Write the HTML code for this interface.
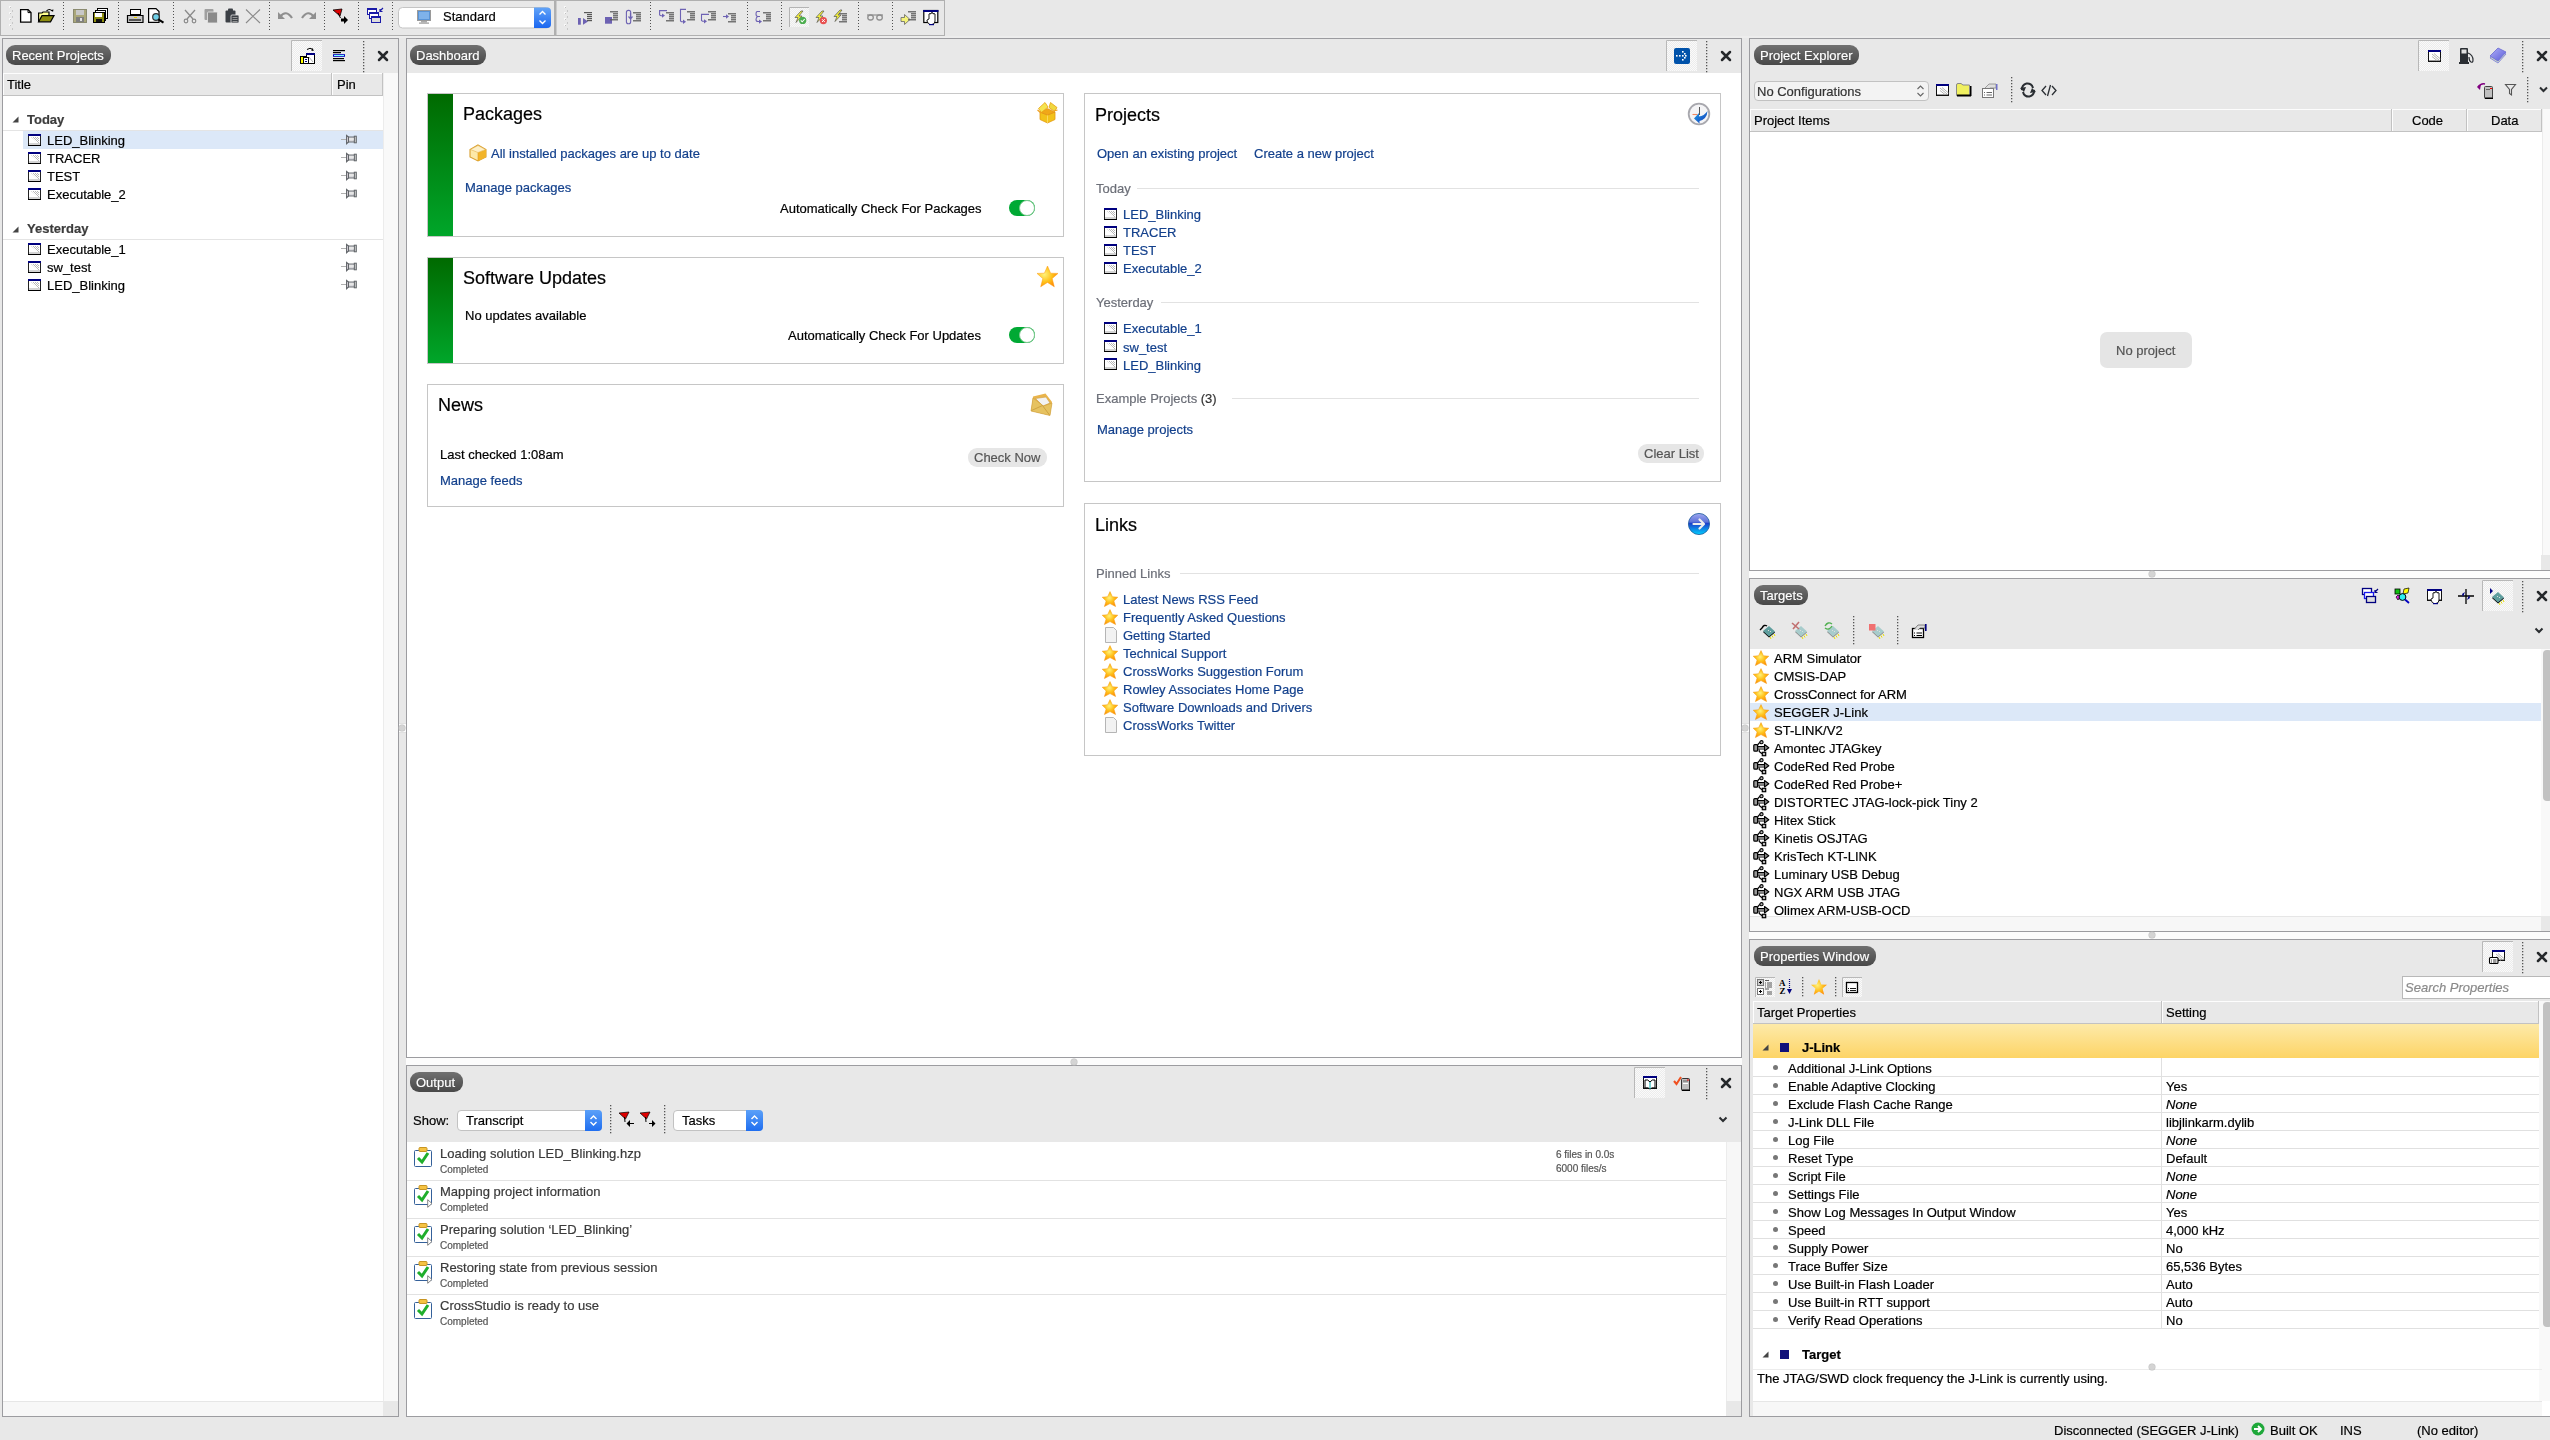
<!DOCTYPE html>
<html><head><meta charset="utf-8"><title>CrossStudio</title>
<style>
html,body{margin:0;padding:0}
body{width:2550px;height:1440px;position:relative;overflow:hidden;background:#e8e8e8;font-family:'Liberation Sans', sans-serif;font-size:13px}
.t{position:absolute;white-space:nowrap;-webkit-text-stroke:0.2px;will-change:transform}
.pill{position:absolute;height:20px;box-sizing:border-box;border-radius:9px;background:linear-gradient(#707070,#484848);color:#fff;font-size:13px;line-height:20px;padding-left:6px;padding-top:1px;-webkit-text-stroke:0.15px #fff;will-change:transform}
svg{overflow:visible}
</style></head><body>
<svg style="position:absolute;left:0;top:0" width="2550" height="38" viewBox="0 0 2550 38"><defs><linearGradient id="cbg" x1="0" y1="0" x2="0" y2="1"><stop offset="0" stop-color="#62a4f8"/><stop offset="1" stop-color="#1a66f0"/></linearGradient><pattern id="chk" width="2" height="2" patternUnits="userSpaceOnUse"><rect width="2" height="2" fill="#ececec"/><rect width="1" height="1" fill="#f8f8f8"/><rect x="1" y="1" width="1" height="1" fill="#f8f8f8"/></pattern></defs><rect x="0.5" y="0.5" width="554" height="35" fill="#e8e8e8" stroke="#b0b0b0"/><rect x="554" y="0" width="2" height="36" fill="#b0b0b0"/><rect x="556" y="0.5" width="388.5" height="35" fill="#e8e8e8" stroke="#b0b0b0"/><rect x="0" y="36" width="2550" height="2" fill="#ededed"/><rect x="9" y="6" width="2" height="2" fill="#f8f8f8"/><rect x="10" y="7" width="1" height="1" fill="#c0c0c0"/><rect x="12" y="10" width="1" height="2" fill="#c8c8c8"/><rect x="9" y="12" width="2" height="2" fill="#f8f8f8"/><rect x="10" y="13" width="1" height="1" fill="#c0c0c0"/><rect x="12" y="16" width="1" height="2" fill="#c8c8c8"/><rect x="9" y="18" width="2" height="2" fill="#f8f8f8"/><rect x="10" y="19" width="1" height="1" fill="#c0c0c0"/><rect x="12" y="22" width="1" height="2" fill="#c8c8c8"/><rect x="9" y="24" width="2" height="2" fill="#f8f8f8"/><rect x="10" y="25" width="1" height="1" fill="#c0c0c0"/><rect x="12" y="28" width="1" height="2" fill="#c8c8c8"/><path d="M20.6 9.6 H28 L31 12.6 V22.2 H20.6 Z" fill="#fff" stroke="#000" stroke-width="1.3"/><path d="M28 9.6 V12.6 H31" fill="none" stroke="#000" stroke-width="1"/><path d="M38.6 21.8 V13 H42 L43 12 H49 V15" fill="#ffff90" stroke="#000" stroke-width="1.2"/><path d="M38.6 21.8 L42 15.6 H54 L50.5 21.8 Z" fill="#8e8e10" stroke="#000" stroke-width="1.2"/><path d="M46.5 11 Q49.5 8 52 11" fill="none" stroke="#000" stroke-width="1.1"/><path d="M51 10 L53 12 L53.5 9.5 Z" fill="#000"/><rect x="63" y="2" width="1" height="1" fill="#505050"/><rect x="63" y="5" width="1" height="1" fill="#505050"/><rect x="63" y="8" width="1" height="1" fill="#505050"/><rect x="63" y="11" width="1" height="1" fill="#505050"/><rect x="63" y="14" width="1" height="1" fill="#505050"/><rect x="63" y="17" width="1" height="1" fill="#505050"/><rect x="63" y="20" width="1" height="1" fill="#505050"/><rect x="63" y="23" width="1" height="1" fill="#505050"/><rect x="63" y="26" width="1" height="1" fill="#505050"/><rect x="63" y="29" width="1" height="1" fill="#505050"/><rect x="73.5" y="9.5" width="13" height="13" fill="#aaa77a" stroke="#8a8a70"/><rect x="76" y="10" width="8" height="5" fill="#c8c8c8"/><rect x="76" y="17" width="8" height="5" fill="#808080"/><rect x="80" y="18" width="2" height="3" fill="#e0e0e0"/><rect x="97.5" y="8.5" width="10" height="10" fill="#fff" stroke="#000"/><rect x="95.5" y="10.5" width="10" height="10" fill="#fff" stroke="#000"/><rect x="93.5" y="12.5" width="11" height="10" fill="#8e8e10" stroke="#000"/><rect x="95" y="13" width="7" height="4" fill="#fff"/><rect x="96" y="19" width="6" height="3" fill="#111"/><rect x="118" y="2" width="1" height="1" fill="#505050"/><rect x="118" y="5" width="1" height="1" fill="#505050"/><rect x="118" y="8" width="1" height="1" fill="#505050"/><rect x="118" y="11" width="1" height="1" fill="#505050"/><rect x="118" y="14" width="1" height="1" fill="#505050"/><rect x="118" y="17" width="1" height="1" fill="#505050"/><rect x="118" y="20" width="1" height="1" fill="#505050"/><rect x="118" y="23" width="1" height="1" fill="#505050"/><rect x="118" y="26" width="1" height="1" fill="#505050"/><rect x="118" y="29" width="1" height="1" fill="#505050"/><rect x="130.5" y="9.5" width="10" height="5" fill="#fff" stroke="#000"/><path d="M127.5 15.5 H143 V22.5 H127.5 Z" fill="#c8c8c8" stroke="#000" stroke-width="1.2"/><rect x="129" y="19" width="12" height="2" fill="#555"/><rect x="134" y="17" width="3" height="1" fill="#e8d000"/><path d="M148.6 8.6 H156 L159 11.6 V22.4 H148.6 Z" fill="#fff" stroke="#000" stroke-width="1.2"/><circle cx="156" cy="17" r="3.3" fill="#6fd0e8" stroke="#333" stroke-width="1.2"/><path d="M158.3 19.3 L163.5 22.6" stroke="#000" stroke-width="2"/><rect x="173" y="2" width="1" height="1" fill="#505050"/><rect x="173" y="5" width="1" height="1" fill="#505050"/><rect x="173" y="8" width="1" height="1" fill="#505050"/><rect x="173" y="11" width="1" height="1" fill="#505050"/><rect x="173" y="14" width="1" height="1" fill="#505050"/><rect x="173" y="17" width="1" height="1" fill="#505050"/><rect x="173" y="20" width="1" height="1" fill="#505050"/><rect x="173" y="23" width="1" height="1" fill="#505050"/><rect x="173" y="26" width="1" height="1" fill="#505050"/><rect x="173" y="29" width="1" height="1" fill="#505050"/><path d="M185 10 L193 19 M195 10 L187 19" stroke="#8a8a8a" stroke-width="1.3"/><circle cx="186" cy="21" r="1.8" fill="none" stroke="#8a8a8a" stroke-width="1.2"/><circle cx="194" cy="21" r="1.8" fill="none" stroke="#8a8a8a" stroke-width="1.2"/><rect x="204.5" y="9" width="9" height="11" rx="1" fill="#a0a0a0"/><rect x="207.5" y="12" width="10" height="11" rx="1" fill="#8a8a8a" stroke="#e8e8e8" stroke-width="0.8"/><rect x="225.5" y="10.5" width="10" height="12" rx="1" fill="#3c4046"/><rect x="228" y="8.5" width="5" height="3" rx="1" fill="#3c4046"/><rect x="231" y="15" width="8" height="8" rx="1" fill="#3c4046" stroke="#e8e8e8" stroke-width="0.8"/><path d="M232.5 17.5 H237.5 M232.5 19.5 H237.5 M232.5 21.5 H237.5" stroke="#aaa" stroke-width="0.8"/><path d="M246 9.5 L260 23 M260 9.5 L246 23" stroke="#8a8a8a" stroke-width="1.1"/><rect x="269" y="2" width="1" height="1" fill="#505050"/><rect x="269" y="5" width="1" height="1" fill="#505050"/><rect x="269" y="8" width="1" height="1" fill="#505050"/><rect x="269" y="11" width="1" height="1" fill="#505050"/><rect x="269" y="14" width="1" height="1" fill="#505050"/><rect x="269" y="17" width="1" height="1" fill="#505050"/><rect x="269" y="20" width="1" height="1" fill="#505050"/><rect x="269" y="23" width="1" height="1" fill="#505050"/><rect x="269" y="26" width="1" height="1" fill="#505050"/><rect x="269" y="29" width="1" height="1" fill="#505050"/><path d="M280 17 Q286 9 292 18" fill="none" stroke="#8f8f8f" stroke-width="2.2"/><path d="M278 12 L278 19 L285 19 Z" fill="#8f8f8f"/><path d="M314 17 Q308 9 302 18" fill="none" stroke="#8f8f8f" stroke-width="2.2"/><path d="M316 12 L316 19 L309 19 Z" fill="#8f8f8f"/><rect x="324" y="2" width="1" height="1" fill="#505050"/><rect x="324" y="5" width="1" height="1" fill="#505050"/><rect x="324" y="8" width="1" height="1" fill="#505050"/><rect x="324" y="11" width="1" height="1" fill="#505050"/><rect x="324" y="14" width="1" height="1" fill="#505050"/><rect x="324" y="17" width="1" height="1" fill="#505050"/><rect x="324" y="20" width="1" height="1" fill="#505050"/><rect x="324" y="23" width="1" height="1" fill="#505050"/><rect x="324" y="26" width="1" height="1" fill="#505050"/><rect x="324" y="29" width="1" height="1" fill="#505050"/><path d="M333 10 L342 9 L340 16 Z" fill="#e00000" stroke="#000" stroke-width="0.8"/><path d="M338 13 L340.5 18" stroke="#000" stroke-width="1"/><path d="M341 18.5 H344 V16 L348 20 L344 24 V21.5 H341 Z" fill="#000"/><rect x="358" y="2" width="1" height="1" fill="#505050"/><rect x="358" y="5" width="1" height="1" fill="#505050"/><rect x="358" y="8" width="1" height="1" fill="#505050"/><rect x="358" y="11" width="1" height="1" fill="#505050"/><rect x="358" y="14" width="1" height="1" fill="#505050"/><rect x="358" y="17" width="1" height="1" fill="#505050"/><rect x="358" y="20" width="1" height="1" fill="#505050"/><rect x="358" y="23" width="1" height="1" fill="#505050"/><rect x="358" y="26" width="1" height="1" fill="#505050"/><rect x="358" y="29" width="1" height="1" fill="#505050"/><rect x="367.5" y="8.5" width="9" height="6" fill="#fff" stroke="#1a1aa8"/><rect x="369.5" y="12.5" width="9" height="6" fill="#fff" stroke="#1a1aa8"/><rect x="371.5" y="16.5" width="9" height="6" fill="#dcdcdc" stroke="#1a1aa8"/><rect x="367" y="8" width="10" height="2" fill="#1a1aa8"/><rect x="369" y="12" width="10" height="2" fill="#1a1aa8"/><rect x="371" y="16" width="10" height="2" fill="#1a1aa8"/><path d="M383 8 L380 11 M380 9 V11.5 H382.5" stroke="#1a1aa8" stroke-width="1.2" fill="none"/><rect x="392" y="2" width="1" height="1" fill="#505050"/><rect x="392" y="5" width="1" height="1" fill="#505050"/><rect x="392" y="8" width="1" height="1" fill="#505050"/><rect x="392" y="11" width="1" height="1" fill="#505050"/><rect x="392" y="14" width="1" height="1" fill="#505050"/><rect x="392" y="17" width="1" height="1" fill="#505050"/><rect x="392" y="20" width="1" height="1" fill="#505050"/><rect x="392" y="23" width="1" height="1" fill="#505050"/><rect x="392" y="26" width="1" height="1" fill="#505050"/><rect x="392" y="29" width="1" height="1" fill="#505050"/><rect x="398.5" y="7.5" width="152" height="20.5" rx="4" fill="#fff" stroke="#c4c4c4"/><path d="M534 7.5 H547 A4 4 0 0 1 551 11.5 V24 A4 4 0 0 1 547 28 H534 Z" fill="url(#cbg)"/><path d="M539.5 14.5 L542.5 11.5 L545.5 14.5 M539.5 20.5 L542.5 23.5 L545.5 20.5" stroke="#fff" stroke-width="1.4" fill="none"/><rect x="417.5" y="10.5" width="13" height="10" fill="#5a94d6" stroke="#9a9a9a"/><rect x="419" y="12" width="10" height="7" fill="#7fb2ea"/><rect x="421" y="21" width="6" height="1.5" fill="#aaa"/><rect x="419" y="22.5" width="10" height="1.2" fill="#999"/><rect x="564" y="6" width="2" height="2" fill="#f8f8f8"/><rect x="565" y="7" width="1" height="1" fill="#c0c0c0"/><rect x="567" y="10" width="1" height="2" fill="#c8c8c8"/><rect x="564" y="12" width="2" height="2" fill="#f8f8f8"/><rect x="565" y="13" width="1" height="1" fill="#c0c0c0"/><rect x="567" y="16" width="1" height="2" fill="#c8c8c8"/><rect x="564" y="18" width="2" height="2" fill="#f8f8f8"/><rect x="565" y="19" width="1" height="1" fill="#c0c0c0"/><rect x="567" y="22" width="1" height="2" fill="#c8c8c8"/><rect x="564" y="24" width="2" height="2" fill="#f8f8f8"/><rect x="565" y="25" width="1" height="1" fill="#c0c0c0"/><rect x="567" y="28" width="1" height="2" fill="#c8c8c8"/><rect x="578" y="18" width="2.8" height="6.7" fill="#6d62b3"/><path d="M583 18 L588 21.4 L583 24.7 Z" fill="#6d62b3"/><rect x="584" y="12" width="8" height="1.2" fill="#585858"/><rect x="587" y="14" width="5" height="1.2" fill="#585858"/><rect x="587" y="16" width="5" height="1.2" fill="#585858"/><rect x="587" y="18" width="5" height="1.2" fill="#585858"/><rect x="587" y="20" width="5" height="1.2" fill="#585858"/><rect x="605" y="17" width="7" height="6.7" fill="#6d62b3"/><rect x="610" y="11.2" width="8" height="1.2" fill="#585858"/><rect x="613" y="13.2" width="5" height="1.2" fill="#585858"/><rect x="613" y="15.2" width="5" height="1.2" fill="#585858"/><rect x="613" y="17.2" width="5" height="1.2" fill="#585858"/><rect x="610" y="19.2" width="8" height="1.2" fill="#585858"/><rect x="626.4" y="10.4" width="4.3" height="13.4" rx="2" fill="none" stroke="#6d62b3" stroke-width="1.1"/><path d="M630.5 13 V18 M628.5 16.5 L630.5 18.8 L632.5 16.5" stroke="#6d62b3" stroke-width="1.2" fill="none"/><rect x="633" y="12.2" width="8" height="1.2" fill="#585858"/><rect x="636" y="14.2" width="5" height="1.2" fill="#585858"/><rect x="636" y="16.2" width="5" height="1.2" fill="#585858"/><rect x="636" y="18.2" width="5" height="1.2" fill="#585858"/><rect x="633" y="20.2" width="8" height="1.2" fill="#585858"/><rect x="650" y="2" width="1" height="1" fill="#505050"/><rect x="650" y="5" width="1" height="1" fill="#505050"/><rect x="650" y="8" width="1" height="1" fill="#505050"/><rect x="650" y="11" width="1" height="1" fill="#505050"/><rect x="650" y="14" width="1" height="1" fill="#505050"/><rect x="650" y="17" width="1" height="1" fill="#505050"/><rect x="650" y="20" width="1" height="1" fill="#505050"/><rect x="650" y="23" width="1" height="1" fill="#505050"/><rect x="650" y="26" width="1" height="1" fill="#505050"/><rect x="650" y="29" width="1" height="1" fill="#505050"/><path d="M667 10.6 H659.6 V15 L661 15.8 H663" stroke="#6d62b3" stroke-width="1.1" fill="none"/><path d="M662 13.5 L665 15.6 L662 17.8 Z" fill="#6d62b3"/><rect x="666" y="12.2" width="8" height="1.2" fill="#585858"/><rect x="669" y="14.2" width="5" height="1.2" fill="#585858"/><rect x="669" y="16.2" width="5" height="1.2" fill="#585858"/><rect x="669" y="18.2" width="5" height="1.2" fill="#585858"/><rect x="666" y="20.2" width="8" height="1.2" fill="#585858"/><path d="M686 9.4 H680.5 V21 L681.5 21.7 H684" stroke="#6d62b3" stroke-width="1.1" fill="none"/><path d="M683 19.6 L686 21.7 L683 23.9 Z" fill="#6d62b3"/><rect x="687" y="11.2" width="8" height="1.2" fill="#585858"/><rect x="690" y="13.2" width="5" height="1.2" fill="#585858"/><rect x="690" y="15.2" width="5" height="1.2" fill="#585858"/><rect x="690" y="17.2" width="5" height="1.2" fill="#585858"/><rect x="687" y="19.2" width="8" height="1.2" fill="#585858"/><path d="M709 14.4 H701.5 V20.5 L702.5 21.2 H705" stroke="#6d62b3" stroke-width="1.1" fill="none"/><path d="M704 19.2 L707 21.3 L704 23.5 Z" fill="#6d62b3"/><rect x="708" y="11.2" width="8" height="1.2" fill="#585858"/><rect x="711" y="13.2" width="5" height="1.2" fill="#585858"/><rect x="711" y="15.2" width="5" height="1.2" fill="#585858"/><rect x="711" y="17.2" width="5" height="1.2" fill="#585858"/><rect x="708" y="19.2" width="8" height="1.2" fill="#585858"/><path d="M723 16.5 H727" stroke="#6d62b3" stroke-width="1.1"/><path d="M726 14.3 L729 16.5 L726 18.7 Z" fill="#6d62b3"/><rect x="728" y="13.2" width="8" height="1.2" fill="#585858"/><rect x="731" y="15.2" width="5" height="1.2" fill="#585858"/><rect x="731" y="17.2" width="5" height="1.2" fill="#585858"/><rect x="731" y="19.2" width="5" height="1.2" fill="#585858"/><rect x="728" y="21.2" width="8" height="1.2" fill="#585858"/><rect x="747" y="2" width="1" height="1" fill="#505050"/><rect x="747" y="5" width="1" height="1" fill="#505050"/><rect x="747" y="8" width="1" height="1" fill="#505050"/><rect x="747" y="11" width="1" height="1" fill="#505050"/><rect x="747" y="14" width="1" height="1" fill="#505050"/><rect x="747" y="17" width="1" height="1" fill="#505050"/><rect x="747" y="20" width="1" height="1" fill="#505050"/><rect x="747" y="23" width="1" height="1" fill="#505050"/><rect x="747" y="26" width="1" height="1" fill="#505050"/><rect x="747" y="29" width="1" height="1" fill="#505050"/><path d="M760 11.5 H757 Q756 12 756 14 Q756 16.5 758 16.5 H760 M758 16.5 Q756 17 756 19.5 Q756 21.5 758 21.5 H760" stroke="#6d62b3" stroke-width="1.1" fill="none"/><path d="M759 19.4 L762 21.5 L759 23.7 Z" fill="#6d62b3"/><rect x="763" y="12.2" width="8" height="1.2" fill="#585858"/><rect x="766" y="14.2" width="5" height="1.2" fill="#585858"/><rect x="766" y="16.2" width="5" height="1.2" fill="#585858"/><rect x="766" y="18.2" width="5" height="1.2" fill="#585858"/><rect x="763" y="20.2" width="8" height="1.2" fill="#585858"/><rect x="781" y="2" width="1" height="1" fill="#505050"/><rect x="781" y="5" width="1" height="1" fill="#505050"/><rect x="781" y="8" width="1" height="1" fill="#505050"/><rect x="781" y="11" width="1" height="1" fill="#505050"/><rect x="781" y="14" width="1" height="1" fill="#505050"/><rect x="781" y="17" width="1" height="1" fill="#505050"/><rect x="781" y="20" width="1" height="1" fill="#505050"/><rect x="781" y="23" width="1" height="1" fill="#505050"/><rect x="781" y="26" width="1" height="1" fill="#505050"/><rect x="781" y="29" width="1" height="1" fill="#505050"/><rect x="789" y="7" width="20" height="20" fill="url(#chk)"/><path d="M789.5 27 V7.5 H809" stroke="#b4b4b4" fill="none"/><path d="M801 11 L803 11 L799 16 L802 16 L796 22.5 L798 17.5 L795 17.5 Z" fill="#f3f03a" stroke="#555" stroke-width="0.7"/><circle cx="802.7" cy="20.4" r="3.6" fill="#4cae4f"/><path d="M800.8 20.4 L802.2 21.8 L804.7 19" stroke="#fff" stroke-width="1.1" fill="none"/><path d="M822 11 L824 11 L820 16 L823 16 L817 22.5 L819 17.5 L816 17.5 Z" fill="#f3f03a" stroke="#555" stroke-width="0.7"/><circle cx="823.4" cy="20.6" r="3.6" fill="#e85050"/><path d="M822 19.2 L824.8 22 M824.8 19.2 L822 22" stroke="#fff" stroke-width="1"/><path d="M840 10 L842 10 L838 15 L841 15 L835 21.5 L837 16.5 L834 16.5 Z" fill="#f3f03a" stroke="#555" stroke-width="0.7"/><rect x="839" y="13.2" width="8" height="1.2" fill="#585858"/><rect x="842" y="15.2" width="5" height="1.2" fill="#585858"/><rect x="842" y="17.2" width="5" height="1.2" fill="#585858"/><rect x="842" y="19.2" width="5" height="1.2" fill="#585858"/><rect x="839" y="21.2" width="8" height="1.2" fill="#585858"/><rect x="858" y="2" width="1" height="1" fill="#505050"/><rect x="858" y="5" width="1" height="1" fill="#505050"/><rect x="858" y="8" width="1" height="1" fill="#505050"/><rect x="858" y="11" width="1" height="1" fill="#505050"/><rect x="858" y="14" width="1" height="1" fill="#505050"/><rect x="858" y="17" width="1" height="1" fill="#505050"/><rect x="858" y="20" width="1" height="1" fill="#505050"/><rect x="858" y="23" width="1" height="1" fill="#505050"/><rect x="858" y="26" width="1" height="1" fill="#505050"/><rect x="858" y="29" width="1" height="1" fill="#505050"/><path d="M867 15 H883" stroke="#8f8f8f" stroke-width="1.2"/><rect x="867.8" y="15" width="5.5" height="5" rx="2.5" fill="none" stroke="#8f8f8f" stroke-width="1.3"/><rect x="876.8" y="15" width="5.5" height="5" rx="2.5" fill="none" stroke="#8f8f8f" stroke-width="1.3"/><rect x="892" y="2" width="1" height="1" fill="#505050"/><rect x="892" y="5" width="1" height="1" fill="#505050"/><rect x="892" y="8" width="1" height="1" fill="#505050"/><rect x="892" y="11" width="1" height="1" fill="#505050"/><rect x="892" y="14" width="1" height="1" fill="#505050"/><rect x="892" y="17" width="1" height="1" fill="#505050"/><rect x="892" y="20" width="1" height="1" fill="#505050"/><rect x="892" y="23" width="1" height="1" fill="#505050"/><rect x="892" y="26" width="1" height="1" fill="#505050"/><rect x="892" y="29" width="1" height="1" fill="#505050"/><path d="M901 17.5 H904.5 V14.5 L910 19.5 L904.5 24.5 V21.5 H901 Z" fill="#f4f37a" stroke="#666" stroke-width="0.8"/><rect x="908" y="11.2" width="8" height="1.2" fill="#585858"/><rect x="911" y="13.2" width="5" height="1.2" fill="#585858"/><rect x="911" y="15.2" width="5" height="1.2" fill="#585858"/><rect x="911" y="17.2" width="5" height="1.2" fill="#585858"/><rect x="908" y="19.2" width="8" height="1.2" fill="#585858"/><rect x="923.8" y="10.5" width="14" height="12" fill="#fff" stroke="#000" stroke-width="1.2"/><rect x="923.2" y="10" width="15.2" height="2" fill="#000080"/><path d="M927 20 L929 19 V14 Q930 13 931 14 V13 Q932 12 933 13 V14 Q934 13 935 14 V21 Q935 24 932 24.5 H930 Q928 24 927 21 Z" fill="#fff" stroke="#000" stroke-width="0.9"/><rect x="929" y="24" width="5" height="1.2" fill="#000080"/></svg><div class="t" style="left:443px;top:9px;font-size:13px;line-height:16px;color:#000;font-weight:normal;font-style:normal;">Standard</div><div style="position:absolute;left:2px;top:38px;width:397px;height:1379px;box-sizing:border-box;border:1px solid #9c9ca0;background:#fff"></div><div style="position:absolute;left:3px;top:39px;width:395px;height:34px;background:#e8e8e8"></div><div class="pill" style="left:6px;top:45px;width:105px;">Recent Projects</div><div style="position:absolute;left:383px;top:73px;width:15px;height:1343px;background:#f9f9f9;border-left:1px solid #ececec;box-sizing:border-box"></div><div style="position:absolute;left:3px;top:73px;width:380px;height:23px;background:#e8e8e8"></div><div style="position:absolute;left:3px;top:73px;width:380px;height:1px;background:#fdfdfd"></div><div style="position:absolute;left:3px;top:95px;width:380px;height:1px;background:#c2c2c2"></div><div style="position:absolute;left:382px;top:73px;width:1px;height:23px;background:#c2c2c2"></div><div style="position:absolute;left:331px;top:73px;width:1px;height:22px;background:#c2c2c2"></div><div style="position:absolute;left:332px;top:74px;width:1px;height:21px;background:#fdfdfd"></div><div style="position:absolute;left:3px;top:74px;width:1px;height:21px;background:#fdfdfd"></div><div style="position:absolute;left:3px;top:1401px;width:380px;height:15px;background:#f7f7f7;border-top:1px solid #e6e6e6;box-sizing:border-box"></div><div style="position:absolute;left:383px;top:1401px;width:15px;height:15px;background:#e8e8e8"></div><div class="t" style="left:7px;top:77px;font-size:13px;line-height:16px;color:#000;font-weight:normal;font-style:normal;">Title</div><div class="t" style="left:337px;top:77px;font-size:13px;line-height:16px;color:#000;font-weight:normal;font-style:normal;">Pin</div><svg style="position:absolute;left:377px;top:50px" width="12" height="12" viewBox="0 0 12 12"><path d="M2 2 L10 10 M10 2 L2 10" stroke="#25282b" stroke-width="2.5" stroke-linecap="round"/></svg><svg style="position:absolute;left:12px;top:116px" width="7" height="7" viewBox="0 0 7 7"><path d="M6.5 0.5 L6.5 6.5 L0.5 6.5 Z" fill="#444"/></svg><div class="t" style="left:27px;top:112px;font-size:13px;line-height:16px;color:#3c3c3c;font-weight:bold;font-style:normal;">Today</div><div style="position:absolute;left:3px;top:130px;width:380px;height:1px;background:#e4e4e4"></div><div style="position:absolute;left:23px;top:131px;width:360px;height:18px;background:#dce8f8"></div><svg style="position:absolute;left:12px;top:226px" width="7" height="7" viewBox="0 0 7 7"><path d="M6.5 0.5 L6.5 6.5 L0.5 6.5 Z" fill="#444"/></svg><div class="t" style="left:27px;top:221px;font-size:13px;line-height:16px;color:#3c3c3c;font-weight:bold;font-style:normal;">Yesterday</div><div style="position:absolute;left:3px;top:239px;width:380px;height:1px;background:#e4e4e4"></div><svg style="position:absolute;left:28px;top:134px" width="13" height="12" viewBox="0 0 13 12"><defs><pattern id="pdith" width="2" height="2" patternUnits="userSpaceOnUse"><rect width="2" height="2" fill="#fff"/><rect width="1" height="1" fill="#999"/><rect x="1" y="1" width="1" height="1" fill="#999"/></pattern></defs><rect x="0.5" y="0.5" width="12" height="11" fill="#fff" stroke="#222"/><path d="M3 3 L11 10 H11 V3 Z" fill="url(#pdith)" opacity="0.7"/><rect x="0" y="0" width="13" height="2" fill="#000080"/><rect x="1" y="9.5" width="11" height="1" fill="#aaa"/><rect x="0" y="11" width="13" height="1" fill="#000"/></svg><div class="t" style="left:47px;top:133px;font-size:13px;line-height:16px;color:#000;font-weight:normal;font-style:normal;">LED_Blinking</div><svg style="position:absolute;left:341px;top:135px" width="16" height="10" viewBox="0 0 16 10"><path d="M0 4.5 H5.5" stroke="#b0b0b0" stroke-width="1"/><rect x="7.5" y="2" width="6" height="5" fill="#d8d8dc" stroke="#606468" stroke-width="0.9"/><path d="M5.6 0.5 L7.5 2 V7 L5.6 8.7 Z" fill="#e8e0e8" stroke="#606468" stroke-width="1.1"/><rect x="13.3" y="1.2" width="2" height="6.6" fill="#d0d0d0" stroke="#606468" stroke-width="1"/><path d="M8 4 H13" stroke="#f4f4f0" stroke-width="1"/></svg><svg style="position:absolute;left:28px;top:152px" width="13" height="12" viewBox="0 0 13 12"><defs><pattern id="pdith" width="2" height="2" patternUnits="userSpaceOnUse"><rect width="2" height="2" fill="#fff"/><rect width="1" height="1" fill="#999"/><rect x="1" y="1" width="1" height="1" fill="#999"/></pattern></defs><rect x="0.5" y="0.5" width="12" height="11" fill="#fff" stroke="#222"/><path d="M3 3 L11 10 H11 V3 Z" fill="url(#pdith)" opacity="0.7"/><rect x="0" y="0" width="13" height="2" fill="#000080"/><rect x="1" y="9.5" width="11" height="1" fill="#aaa"/><rect x="0" y="11" width="13" height="1" fill="#000"/></svg><div class="t" style="left:47px;top:151px;font-size:13px;line-height:16px;color:#000;font-weight:normal;font-style:normal;">TRACER</div><svg style="position:absolute;left:341px;top:153px" width="16" height="10" viewBox="0 0 16 10"><path d="M0 4.5 H5.5" stroke="#b0b0b0" stroke-width="1"/><rect x="7.5" y="2" width="6" height="5" fill="#d8d8dc" stroke="#606468" stroke-width="0.9"/><path d="M5.6 0.5 L7.5 2 V7 L5.6 8.7 Z" fill="#e8e0e8" stroke="#606468" stroke-width="1.1"/><rect x="13.3" y="1.2" width="2" height="6.6" fill="#d0d0d0" stroke="#606468" stroke-width="1"/><path d="M8 4 H13" stroke="#f4f4f0" stroke-width="1"/></svg><svg style="position:absolute;left:28px;top:170px" width="13" height="12" viewBox="0 0 13 12"><defs><pattern id="pdith" width="2" height="2" patternUnits="userSpaceOnUse"><rect width="2" height="2" fill="#fff"/><rect width="1" height="1" fill="#999"/><rect x="1" y="1" width="1" height="1" fill="#999"/></pattern></defs><rect x="0.5" y="0.5" width="12" height="11" fill="#fff" stroke="#222"/><path d="M3 3 L11 10 H11 V3 Z" fill="url(#pdith)" opacity="0.7"/><rect x="0" y="0" width="13" height="2" fill="#000080"/><rect x="1" y="9.5" width="11" height="1" fill="#aaa"/><rect x="0" y="11" width="13" height="1" fill="#000"/></svg><div class="t" style="left:47px;top:169px;font-size:13px;line-height:16px;color:#000;font-weight:normal;font-style:normal;">TEST</div><svg style="position:absolute;left:341px;top:171px" width="16" height="10" viewBox="0 0 16 10"><path d="M0 4.5 H5.5" stroke="#b0b0b0" stroke-width="1"/><rect x="7.5" y="2" width="6" height="5" fill="#d8d8dc" stroke="#606468" stroke-width="0.9"/><path d="M5.6 0.5 L7.5 2 V7 L5.6 8.7 Z" fill="#e8e0e8" stroke="#606468" stroke-width="1.1"/><rect x="13.3" y="1.2" width="2" height="6.6" fill="#d0d0d0" stroke="#606468" stroke-width="1"/><path d="M8 4 H13" stroke="#f4f4f0" stroke-width="1"/></svg><svg style="position:absolute;left:28px;top:188px" width="13" height="12" viewBox="0 0 13 12"><defs><pattern id="pdith" width="2" height="2" patternUnits="userSpaceOnUse"><rect width="2" height="2" fill="#fff"/><rect width="1" height="1" fill="#999"/><rect x="1" y="1" width="1" height="1" fill="#999"/></pattern></defs><rect x="0.5" y="0.5" width="12" height="11" fill="#fff" stroke="#222"/><path d="M3 3 L11 10 H11 V3 Z" fill="url(#pdith)" opacity="0.7"/><rect x="0" y="0" width="13" height="2" fill="#000080"/><rect x="1" y="9.5" width="11" height="1" fill="#aaa"/><rect x="0" y="11" width="13" height="1" fill="#000"/></svg><div class="t" style="left:47px;top:187px;font-size:13px;line-height:16px;color:#000;font-weight:normal;font-style:normal;">Executable_2</div><svg style="position:absolute;left:341px;top:189px" width="16" height="10" viewBox="0 0 16 10"><path d="M0 4.5 H5.5" stroke="#b0b0b0" stroke-width="1"/><rect x="7.5" y="2" width="6" height="5" fill="#d8d8dc" stroke="#606468" stroke-width="0.9"/><path d="M5.6 0.5 L7.5 2 V7 L5.6 8.7 Z" fill="#e8e0e8" stroke="#606468" stroke-width="1.1"/><rect x="13.3" y="1.2" width="2" height="6.6" fill="#d0d0d0" stroke="#606468" stroke-width="1"/><path d="M8 4 H13" stroke="#f4f4f0" stroke-width="1"/></svg><svg style="position:absolute;left:28px;top:243px" width="13" height="12" viewBox="0 0 13 12"><defs><pattern id="pdith" width="2" height="2" patternUnits="userSpaceOnUse"><rect width="2" height="2" fill="#fff"/><rect width="1" height="1" fill="#999"/><rect x="1" y="1" width="1" height="1" fill="#999"/></pattern></defs><rect x="0.5" y="0.5" width="12" height="11" fill="#fff" stroke="#222"/><path d="M3 3 L11 10 H11 V3 Z" fill="url(#pdith)" opacity="0.7"/><rect x="0" y="0" width="13" height="2" fill="#000080"/><rect x="1" y="9.5" width="11" height="1" fill="#aaa"/><rect x="0" y="11" width="13" height="1" fill="#000"/></svg><div class="t" style="left:47px;top:242px;font-size:13px;line-height:16px;color:#000;font-weight:normal;font-style:normal;">Executable_1</div><svg style="position:absolute;left:341px;top:244px" width="16" height="10" viewBox="0 0 16 10"><path d="M0 4.5 H5.5" stroke="#b0b0b0" stroke-width="1"/><rect x="7.5" y="2" width="6" height="5" fill="#d8d8dc" stroke="#606468" stroke-width="0.9"/><path d="M5.6 0.5 L7.5 2 V7 L5.6 8.7 Z" fill="#e8e0e8" stroke="#606468" stroke-width="1.1"/><rect x="13.3" y="1.2" width="2" height="6.6" fill="#d0d0d0" stroke="#606468" stroke-width="1"/><path d="M8 4 H13" stroke="#f4f4f0" stroke-width="1"/></svg><svg style="position:absolute;left:28px;top:261px" width="13" height="12" viewBox="0 0 13 12"><defs><pattern id="pdith" width="2" height="2" patternUnits="userSpaceOnUse"><rect width="2" height="2" fill="#fff"/><rect width="1" height="1" fill="#999"/><rect x="1" y="1" width="1" height="1" fill="#999"/></pattern></defs><rect x="0.5" y="0.5" width="12" height="11" fill="#fff" stroke="#222"/><path d="M3 3 L11 10 H11 V3 Z" fill="url(#pdith)" opacity="0.7"/><rect x="0" y="0" width="13" height="2" fill="#000080"/><rect x="1" y="9.5" width="11" height="1" fill="#aaa"/><rect x="0" y="11" width="13" height="1" fill="#000"/></svg><div class="t" style="left:47px;top:260px;font-size:13px;line-height:16px;color:#000;font-weight:normal;font-style:normal;">sw_test</div><svg style="position:absolute;left:341px;top:262px" width="16" height="10" viewBox="0 0 16 10"><path d="M0 4.5 H5.5" stroke="#b0b0b0" stroke-width="1"/><rect x="7.5" y="2" width="6" height="5" fill="#d8d8dc" stroke="#606468" stroke-width="0.9"/><path d="M5.6 0.5 L7.5 2 V7 L5.6 8.7 Z" fill="#e8e0e8" stroke="#606468" stroke-width="1.1"/><rect x="13.3" y="1.2" width="2" height="6.6" fill="#d0d0d0" stroke="#606468" stroke-width="1"/><path d="M8 4 H13" stroke="#f4f4f0" stroke-width="1"/></svg><svg style="position:absolute;left:28px;top:279px" width="13" height="12" viewBox="0 0 13 12"><defs><pattern id="pdith" width="2" height="2" patternUnits="userSpaceOnUse"><rect width="2" height="2" fill="#fff"/><rect width="1" height="1" fill="#999"/><rect x="1" y="1" width="1" height="1" fill="#999"/></pattern></defs><rect x="0.5" y="0.5" width="12" height="11" fill="#fff" stroke="#222"/><path d="M3 3 L11 10 H11 V3 Z" fill="url(#pdith)" opacity="0.7"/><rect x="0" y="0" width="13" height="2" fill="#000080"/><rect x="1" y="9.5" width="11" height="1" fill="#aaa"/><rect x="0" y="11" width="13" height="1" fill="#000"/></svg><div class="t" style="left:47px;top:278px;font-size:13px;line-height:16px;color:#000;font-weight:normal;font-style:normal;">LED_Blinking</div><svg style="position:absolute;left:341px;top:280px" width="16" height="10" viewBox="0 0 16 10"><path d="M0 4.5 H5.5" stroke="#b0b0b0" stroke-width="1"/><rect x="7.5" y="2" width="6" height="5" fill="#d8d8dc" stroke="#606468" stroke-width="0.9"/><path d="M5.6 0.5 L7.5 2 V7 L5.6 8.7 Z" fill="#e8e0e8" stroke="#606468" stroke-width="1.1"/><rect x="13.3" y="1.2" width="2" height="6.6" fill="#d0d0d0" stroke="#606468" stroke-width="1"/><path d="M8 4 H13" stroke="#f4f4f0" stroke-width="1"/></svg><div style="position:absolute;left:406px;top:38px;width:1336px;height:1020px;box-sizing:border-box;border:1px solid #9c9ca0;background:#fff"></div><div style="position:absolute;left:407px;top:39px;width:1334px;height:34px;background:#e8e8e8"></div><div class="pill" style="left:410px;top:45px;width:76px;">Dashboard</div><svg style="position:absolute;left:1720px;top:50px" width="12" height="12" viewBox="0 0 12 12"><path d="M2 2 L10 10 M10 2 L2 10" stroke="#25282b" stroke-width="2.5" stroke-linecap="round"/></svg><div style="position:absolute;left:427px;top:93px;width:637px;height:144px;box-sizing:border-box;border:1px solid #c6c6c6;background:#fff"></div><div style="position:absolute;left:428px;top:94px;width:25px;height:142px;background:linear-gradient(#006a00,#00a62a)"></div><div class="t" style="left:463px;top:104px;font-size:18px;line-height:20px;color:#000;font-weight:normal;font-style:normal;">Packages</div><div class="t" style="left:491px;top:146px;font-size:13px;line-height:16px;color:#13408c;font-weight:normal;font-style:normal;">All installed packages are up to date</div><div class="t" style="left:465px;top:180px;font-size:13px;line-height:16px;color:#13408c;font-weight:normal;font-style:normal;">Manage packages</div><div class="t" style="left:780px;top:201px;font-size:13px;line-height:16px;color:#000;font-weight:normal;font-style:normal;">Automatically Check For Packages</div><div style="position:absolute;left:1009px;top:200px;width:26px;height:16px;box-sizing:border-box;border-radius:8px;background:#00a934"></div><div style="position:absolute;left:1019px;top:200px;width:16px;height:16px;box-sizing:border-box;border-radius:8px;background:#fff;border:1px solid #7cc98f"></div><div style="position:absolute;left:427px;top:257px;width:637px;height:107px;box-sizing:border-box;border:1px solid #c6c6c6;background:#fff"></div><div style="position:absolute;left:428px;top:258px;width:25px;height:105px;background:linear-gradient(#006a00,#00a62a)"></div><div class="t" style="left:463px;top:268px;font-size:18px;line-height:20px;color:#000;font-weight:normal;font-style:normal;">Software Updates</div><div class="t" style="left:465px;top:308px;font-size:13px;line-height:16px;color:#000;font-weight:normal;font-style:normal;">No updates available</div><div class="t" style="left:788px;top:328px;font-size:13px;line-height:16px;color:#000;font-weight:normal;font-style:normal;">Automatically Check For Updates</div><div style="position:absolute;left:1009px;top:327px;width:26px;height:16px;box-sizing:border-box;border-radius:8px;background:#00a934"></div><div style="position:absolute;left:1019px;top:327px;width:16px;height:16px;box-sizing:border-box;border-radius:8px;background:#fff;border:1px solid #7cc98f"></div><div style="position:absolute;left:427px;top:384px;width:637px;height:123px;box-sizing:border-box;border:1px solid #c6c6c6;background:#fff"></div><div class="t" style="left:438px;top:395px;font-size:18px;line-height:20px;color:#000;font-weight:normal;font-style:normal;">News</div><div class="t" style="left:440px;top:447px;font-size:13px;line-height:16px;color:#000;font-weight:normal;font-style:normal;">Last checked 1:08am</div><div style="position:absolute;left:968px;top:448px;width:79px;height:19px;border-radius:9px;background:#e6e6e6"></div><div class="t" style="left:974px;top:450px;font-size:13px;line-height:16px;color:#555;font-weight:normal;font-style:normal;">Check Now</div><div class="t" style="left:440px;top:473px;font-size:13px;line-height:16px;color:#13408c;font-weight:normal;font-style:normal;">Manage feeds</div><div style="position:absolute;left:1084px;top:93px;width:637px;height:389px;box-sizing:border-box;border:1px solid #c6c6c6;background:#fff"></div><div class="t" style="left:1095px;top:105px;font-size:18px;line-height:20px;color:#000;font-weight:normal;font-style:normal;">Projects</div><div class="t" style="left:1097px;top:146px;font-size:13px;line-height:16px;color:#13408c;font-weight:normal;font-style:normal;">Open an existing project</div><div class="t" style="left:1254px;top:146px;font-size:13px;line-height:16px;color:#13408c;font-weight:normal;font-style:normal;">Create a new project</div><div class="t" style="left:1096px;top:181px;font-size:13px;line-height:16px;color:#6c6f78;font-weight:normal;font-style:normal;">Today</div><div style="position:absolute;left:1137px;top:188px;width:562px;height:1px;background:#e2e2e2"></div><svg style="position:absolute;left:1104px;top:208px" width="13" height="12" viewBox="0 0 13 12"><defs><pattern id="pdith" width="2" height="2" patternUnits="userSpaceOnUse"><rect width="2" height="2" fill="#fff"/><rect width="1" height="1" fill="#999"/><rect x="1" y="1" width="1" height="1" fill="#999"/></pattern></defs><rect x="0.5" y="0.5" width="12" height="11" fill="#fff" stroke="#222"/><path d="M3 3 L11 10 H11 V3 Z" fill="url(#pdith)" opacity="0.7"/><rect x="0" y="0" width="13" height="2" fill="#000080"/><rect x="1" y="9.5" width="11" height="1" fill="#aaa"/><rect x="0" y="11" width="13" height="1" fill="#000"/></svg><div class="t" style="left:1123px;top:207px;font-size:13px;line-height:16px;color:#13408c;font-weight:normal;font-style:normal;">LED_Blinking</div><svg style="position:absolute;left:1104px;top:226px" width="13" height="12" viewBox="0 0 13 12"><defs><pattern id="pdith" width="2" height="2" patternUnits="userSpaceOnUse"><rect width="2" height="2" fill="#fff"/><rect width="1" height="1" fill="#999"/><rect x="1" y="1" width="1" height="1" fill="#999"/></pattern></defs><rect x="0.5" y="0.5" width="12" height="11" fill="#fff" stroke="#222"/><path d="M3 3 L11 10 H11 V3 Z" fill="url(#pdith)" opacity="0.7"/><rect x="0" y="0" width="13" height="2" fill="#000080"/><rect x="1" y="9.5" width="11" height="1" fill="#aaa"/><rect x="0" y="11" width="13" height="1" fill="#000"/></svg><div class="t" style="left:1123px;top:225px;font-size:13px;line-height:16px;color:#13408c;font-weight:normal;font-style:normal;">TRACER</div><svg style="position:absolute;left:1104px;top:244px" width="13" height="12" viewBox="0 0 13 12"><defs><pattern id="pdith" width="2" height="2" patternUnits="userSpaceOnUse"><rect width="2" height="2" fill="#fff"/><rect width="1" height="1" fill="#999"/><rect x="1" y="1" width="1" height="1" fill="#999"/></pattern></defs><rect x="0.5" y="0.5" width="12" height="11" fill="#fff" stroke="#222"/><path d="M3 3 L11 10 H11 V3 Z" fill="url(#pdith)" opacity="0.7"/><rect x="0" y="0" width="13" height="2" fill="#000080"/><rect x="1" y="9.5" width="11" height="1" fill="#aaa"/><rect x="0" y="11" width="13" height="1" fill="#000"/></svg><div class="t" style="left:1123px;top:243px;font-size:13px;line-height:16px;color:#13408c;font-weight:normal;font-style:normal;">TEST</div><svg style="position:absolute;left:1104px;top:262px" width="13" height="12" viewBox="0 0 13 12"><defs><pattern id="pdith" width="2" height="2" patternUnits="userSpaceOnUse"><rect width="2" height="2" fill="#fff"/><rect width="1" height="1" fill="#999"/><rect x="1" y="1" width="1" height="1" fill="#999"/></pattern></defs><rect x="0.5" y="0.5" width="12" height="11" fill="#fff" stroke="#222"/><path d="M3 3 L11 10 H11 V3 Z" fill="url(#pdith)" opacity="0.7"/><rect x="0" y="0" width="13" height="2" fill="#000080"/><rect x="1" y="9.5" width="11" height="1" fill="#aaa"/><rect x="0" y="11" width="13" height="1" fill="#000"/></svg><div class="t" style="left:1123px;top:261px;font-size:13px;line-height:16px;color:#13408c;font-weight:normal;font-style:normal;">Executable_2</div><div class="t" style="left:1096px;top:295px;font-size:13px;line-height:16px;color:#6c6f78;font-weight:normal;font-style:normal;">Yesterday</div><div style="position:absolute;left:1161px;top:302px;width:538px;height:1px;background:#e2e2e2"></div><svg style="position:absolute;left:1104px;top:322px" width="13" height="12" viewBox="0 0 13 12"><defs><pattern id="pdith" width="2" height="2" patternUnits="userSpaceOnUse"><rect width="2" height="2" fill="#fff"/><rect width="1" height="1" fill="#999"/><rect x="1" y="1" width="1" height="1" fill="#999"/></pattern></defs><rect x="0.5" y="0.5" width="12" height="11" fill="#fff" stroke="#222"/><path d="M3 3 L11 10 H11 V3 Z" fill="url(#pdith)" opacity="0.7"/><rect x="0" y="0" width="13" height="2" fill="#000080"/><rect x="1" y="9.5" width="11" height="1" fill="#aaa"/><rect x="0" y="11" width="13" height="1" fill="#000"/></svg><div class="t" style="left:1123px;top:321px;font-size:13px;line-height:16px;color:#13408c;font-weight:normal;font-style:normal;">Executable_1</div><svg style="position:absolute;left:1104px;top:340px" width="13" height="12" viewBox="0 0 13 12"><defs><pattern id="pdith" width="2" height="2" patternUnits="userSpaceOnUse"><rect width="2" height="2" fill="#fff"/><rect width="1" height="1" fill="#999"/><rect x="1" y="1" width="1" height="1" fill="#999"/></pattern></defs><rect x="0.5" y="0.5" width="12" height="11" fill="#fff" stroke="#222"/><path d="M3 3 L11 10 H11 V3 Z" fill="url(#pdith)" opacity="0.7"/><rect x="0" y="0" width="13" height="2" fill="#000080"/><rect x="1" y="9.5" width="11" height="1" fill="#aaa"/><rect x="0" y="11" width="13" height="1" fill="#000"/></svg><div class="t" style="left:1123px;top:340px;font-size:13px;line-height:16px;color:#13408c;font-weight:normal;font-style:normal;">sw_test</div><svg style="position:absolute;left:1104px;top:358px" width="13" height="12" viewBox="0 0 13 12"><defs><pattern id="pdith" width="2" height="2" patternUnits="userSpaceOnUse"><rect width="2" height="2" fill="#fff"/><rect width="1" height="1" fill="#999"/><rect x="1" y="1" width="1" height="1" fill="#999"/></pattern></defs><rect x="0.5" y="0.5" width="12" height="11" fill="#fff" stroke="#222"/><path d="M3 3 L11 10 H11 V3 Z" fill="url(#pdith)" opacity="0.7"/><rect x="0" y="0" width="13" height="2" fill="#000080"/><rect x="1" y="9.5" width="11" height="1" fill="#aaa"/><rect x="0" y="11" width="13" height="1" fill="#000"/></svg><div class="t" style="left:1123px;top:358px;font-size:13px;line-height:16px;color:#13408c;font-weight:normal;font-style:normal;">LED_Blinking</div><div class="t" style="left:1096px;top:391px;font-size:13px;line-height:16px;color:#6c6f78">Example Projects <span style="color:#333">(3)</span></div><div style="position:absolute;left:1232px;top:398px;width:467px;height:1px;background:#e2e2e2"></div><div class="t" style="left:1097px;top:422px;font-size:13px;line-height:16px;color:#13408c;font-weight:normal;font-style:normal;">Manage projects</div><div style="position:absolute;left:1638px;top:444px;width:66px;height:19px;border-radius:9px;background:#e6e6e6"></div><div class="t" style="left:1644px;top:446px;font-size:13px;line-height:16px;color:#555;font-weight:normal;font-style:normal;">Clear List</div><div style="position:absolute;left:1084px;top:503px;width:637px;height:253px;box-sizing:border-box;border:1px solid #c6c6c6;background:#fff"></div><div class="t" style="left:1095px;top:515px;font-size:18px;line-height:20px;color:#000;font-weight:normal;font-style:normal;">Links</div><div class="t" style="left:1096px;top:566px;font-size:13px;line-height:16px;color:#6c6f78;font-weight:normal;font-style:normal;">Pinned Links</div><div style="position:absolute;left:1180px;top:573px;width:519px;height:1px;background:#e2e2e2"></div><svg style="position:absolute;left:1102px;top:591px" width="16" height="16" viewBox="0 0 16 16"><defs><radialGradient id="sg" cx="0.45" cy="0.42" r="0.65"><stop offset="0" stop-color="#fff27a"/><stop offset="0.45" stop-color="#ffc21c"/><stop offset="1" stop-color="#ff8400"/></radialGradient></defs><path d="M8 0.6 L10.4 5.7 L15.8 6.2 L11.9 10 L13.6 15.6 L8 12.6 L2.4 15.6 L4.1 10 L0.2 6.2 L5.6 5.7 Z" fill="url(#sg)" stroke="#f29a10" stroke-width="0.5" stroke-linejoin="round"/></svg><div class="t" style="left:1123px;top:592px;font-size:13px;line-height:16px;color:#13408c;font-weight:normal;font-style:normal;">Latest News RSS Feed</div><svg style="position:absolute;left:1102px;top:609px" width="16" height="16" viewBox="0 0 16 16"><defs><radialGradient id="sg" cx="0.45" cy="0.42" r="0.65"><stop offset="0" stop-color="#fff27a"/><stop offset="0.45" stop-color="#ffc21c"/><stop offset="1" stop-color="#ff8400"/></radialGradient></defs><path d="M8 0.6 L10.4 5.7 L15.8 6.2 L11.9 10 L13.6 15.6 L8 12.6 L2.4 15.6 L4.1 10 L0.2 6.2 L5.6 5.7 Z" fill="url(#sg)" stroke="#f29a10" stroke-width="0.5" stroke-linejoin="round"/></svg><div class="t" style="left:1123px;top:610px;font-size:13px;line-height:16px;color:#13408c;font-weight:normal;font-style:normal;">Frequently Asked Questions</div><svg style="position:absolute;left:1104px;top:627px" width="14" height="16" viewBox="0 0 14 16"><path d="M1.5 0.5 H9.5 L12.5 3.5 V15.5 H1.5 Z" fill="#f2f2f2" stroke="#b5b5b5"/></svg><div class="t" style="left:1123px;top:628px;font-size:13px;line-height:16px;color:#13408c;font-weight:normal;font-style:normal;">Getting Started</div><svg style="position:absolute;left:1102px;top:645px" width="16" height="16" viewBox="0 0 16 16"><defs><radialGradient id="sg" cx="0.45" cy="0.42" r="0.65"><stop offset="0" stop-color="#fff27a"/><stop offset="0.45" stop-color="#ffc21c"/><stop offset="1" stop-color="#ff8400"/></radialGradient></defs><path d="M8 0.6 L10.4 5.7 L15.8 6.2 L11.9 10 L13.6 15.6 L8 12.6 L2.4 15.6 L4.1 10 L0.2 6.2 L5.6 5.7 Z" fill="url(#sg)" stroke="#f29a10" stroke-width="0.5" stroke-linejoin="round"/></svg><div class="t" style="left:1123px;top:646px;font-size:13px;line-height:16px;color:#13408c;font-weight:normal;font-style:normal;">Technical Support</div><svg style="position:absolute;left:1102px;top:663px" width="16" height="16" viewBox="0 0 16 16"><defs><radialGradient id="sg" cx="0.45" cy="0.42" r="0.65"><stop offset="0" stop-color="#fff27a"/><stop offset="0.45" stop-color="#ffc21c"/><stop offset="1" stop-color="#ff8400"/></radialGradient></defs><path d="M8 0.6 L10.4 5.7 L15.8 6.2 L11.9 10 L13.6 15.6 L8 12.6 L2.4 15.6 L4.1 10 L0.2 6.2 L5.6 5.7 Z" fill="url(#sg)" stroke="#f29a10" stroke-width="0.5" stroke-linejoin="round"/></svg><div class="t" style="left:1123px;top:664px;font-size:13px;line-height:16px;color:#13408c;font-weight:normal;font-style:normal;">CrossWorks Suggestion Forum</div><svg style="position:absolute;left:1102px;top:681px" width="16" height="16" viewBox="0 0 16 16"><defs><radialGradient id="sg" cx="0.45" cy="0.42" r="0.65"><stop offset="0" stop-color="#fff27a"/><stop offset="0.45" stop-color="#ffc21c"/><stop offset="1" stop-color="#ff8400"/></radialGradient></defs><path d="M8 0.6 L10.4 5.7 L15.8 6.2 L11.9 10 L13.6 15.6 L8 12.6 L2.4 15.6 L4.1 10 L0.2 6.2 L5.6 5.7 Z" fill="url(#sg)" stroke="#f29a10" stroke-width="0.5" stroke-linejoin="round"/></svg><div class="t" style="left:1123px;top:682px;font-size:13px;line-height:16px;color:#13408c;font-weight:normal;font-style:normal;">Rowley Associates Home Page</div><svg style="position:absolute;left:1102px;top:699px" width="16" height="16" viewBox="0 0 16 16"><defs><radialGradient id="sg" cx="0.45" cy="0.42" r="0.65"><stop offset="0" stop-color="#fff27a"/><stop offset="0.45" stop-color="#ffc21c"/><stop offset="1" stop-color="#ff8400"/></radialGradient></defs><path d="M8 0.6 L10.4 5.7 L15.8 6.2 L11.9 10 L13.6 15.6 L8 12.6 L2.4 15.6 L4.1 10 L0.2 6.2 L5.6 5.7 Z" fill="url(#sg)" stroke="#f29a10" stroke-width="0.5" stroke-linejoin="round"/></svg><div class="t" style="left:1123px;top:700px;font-size:13px;line-height:16px;color:#13408c;font-weight:normal;font-style:normal;">Software Downloads and Drivers</div><svg style="position:absolute;left:1104px;top:717px" width="14" height="16" viewBox="0 0 14 16"><path d="M1.5 0.5 H9.5 L12.5 3.5 V15.5 H1.5 Z" fill="#f2f2f2" stroke="#b5b5b5"/></svg><div class="t" style="left:1123px;top:718px;font-size:13px;line-height:16px;color:#13408c;font-weight:normal;font-style:normal;">CrossWorks Twitter</div><div style="position:absolute;left:406px;top:1065px;width:1336px;height:352px;box-sizing:border-box;border:1px solid #9c9ca0;background:#fff"></div><div style="position:absolute;left:407px;top:1066px;width:1334px;height:76px;background:#e8e8e8"></div><div class="pill" style="left:410px;top:1072px;width:53px;">Output</div><svg style="position:absolute;left:1720px;top:1077px" width="12" height="12" viewBox="0 0 12 12"><path d="M2 2 L10 10 M10 2 L2 10" stroke="#25282b" stroke-width="2.5" stroke-linecap="round"/></svg><div class="t" style="left:413px;top:1113px;font-size:13px;line-height:16px;color:#000;font-weight:normal;font-style:normal;">Show:</div><div style="position:absolute;left:457px;top:1110px;width:145px;height:21px;box-sizing:border-box;border:1px solid #c2c2c2;border-radius:4px;background:#fff"></div><div style="position:absolute;left:585px;top:1110px;width:17px;height:21px;box-sizing:border-box;border-radius:0 4px 4px 0;background:linear-gradient(#5ba0f8,#1f6ef0)"></div><svg style="position:absolute;left:589px;top:1114px" width="9" height="13" viewBox="0 0 9 13"><path d="M1.5 5 L4.5 2 L7.5 5 M1.5 8 L4.5 11 L7.5 8" stroke="#fff" stroke-width="1.4" fill="none"/></svg><div class="t" style="left:466px;top:1113px;font-size:13px;line-height:16px;color:#000;font-weight:normal;font-style:normal;">Transcript</div><svg style="position:absolute;left:610px;top:1105px" width="2" height="30"><rect x="0" y="0" width="1.3" height="1.3" fill="#555"/><rect x="0" y="3" width="1.3" height="1.3" fill="#555"/><rect x="0" y="6" width="1.3" height="1.3" fill="#555"/><rect x="0" y="9" width="1.3" height="1.3" fill="#555"/><rect x="0" y="12" width="1.3" height="1.3" fill="#555"/><rect x="0" y="15" width="1.3" height="1.3" fill="#555"/><rect x="0" y="18" width="1.3" height="1.3" fill="#555"/><rect x="0" y="21" width="1.3" height="1.3" fill="#555"/><rect x="0" y="24" width="1.3" height="1.3" fill="#555"/><rect x="0" y="27" width="1.3" height="1.3" fill="#555"/></svg><svg style="position:absolute;left:664px;top:1105px" width="2" height="30"><rect x="0" y="0" width="1.3" height="1.3" fill="#555"/><rect x="0" y="3" width="1.3" height="1.3" fill="#555"/><rect x="0" y="6" width="1.3" height="1.3" fill="#555"/><rect x="0" y="9" width="1.3" height="1.3" fill="#555"/><rect x="0" y="12" width="1.3" height="1.3" fill="#555"/><rect x="0" y="15" width="1.3" height="1.3" fill="#555"/><rect x="0" y="18" width="1.3" height="1.3" fill="#555"/><rect x="0" y="21" width="1.3" height="1.3" fill="#555"/><rect x="0" y="24" width="1.3" height="1.3" fill="#555"/><rect x="0" y="27" width="1.3" height="1.3" fill="#555"/></svg><div style="position:absolute;left:673px;top:1110px;width:90px;height:21px;box-sizing:border-box;border:1px solid #c2c2c2;border-radius:4px;background:#fff"></div><div style="position:absolute;left:746px;top:1110px;width:17px;height:21px;box-sizing:border-box;border-radius:0 4px 4px 0;background:linear-gradient(#5ba0f8,#1f6ef0)"></div><svg style="position:absolute;left:750px;top:1114px" width="9" height="13" viewBox="0 0 9 13"><path d="M1.5 5 L4.5 2 L7.5 5 M1.5 8 L4.5 11 L7.5 8" stroke="#fff" stroke-width="1.4" fill="none"/></svg><div class="t" style="left:682px;top:1113px;font-size:13px;line-height:16px;color:#000;font-weight:normal;font-style:normal;">Tasks</div><div style="position:absolute;left:1726px;top:1142px;width:15px;height:274px;background:#f7f7f7;border-left:1px solid #ececec;box-sizing:border-box"></div><div style="position:absolute;left:1726px;top:1401px;width:15px;height:15px;background:#e8e8e8"></div><svg style="position:absolute;left:413px;top:1146px" width="20" height="22" viewBox="0 0 20 22"><rect x="1.5" y="4.5" width="17" height="16" rx="1" fill="#fff" stroke="#34609a"/><rect x="6" y="1.5" width="8" height="4" rx="1" fill="#f5c242" stroke="#c89522"/><path d="M5 12 L9 16 L15 7" stroke="#1fae2b" stroke-width="3" fill="none"/></svg><div class="t" style="left:440px;top:1146px;font-size:13px;line-height:16px;color:#3a3a3a;font-weight:normal;font-style:normal;">Loading solution LED_Blinking.hzp</div><div class="t" style="left:440px;top:1164px;font-size:10px;line-height:12px;color:#555;font-weight:normal;font-style:normal;">Completed</div><div style="position:absolute;left:407px;top:1180px;width:1319px;height:1px;background:#e2e2e2"></div><svg style="position:absolute;left:413px;top:1184px" width="20" height="22" viewBox="0 0 20 22"><rect x="1.5" y="4.5" width="17" height="16" rx="1" fill="#fff" stroke="#34609a"/><rect x="6" y="1.5" width="8" height="4" rx="1" fill="#f5c242" stroke="#c89522"/><path d="M5 12 L9 16 L15 7" stroke="#1fae2b" stroke-width="3" fill="none"/></svg><div class="t" style="left:440px;top:1184px;font-size:13px;line-height:16px;color:#3a3a3a;font-weight:normal;font-style:normal;">Mapping project information</div><div class="t" style="left:440px;top:1202px;font-size:10px;line-height:12px;color:#555;font-weight:normal;font-style:normal;">Completed</div><svg style="position:absolute;left:427px;top:1199px" width="6" height="9" viewBox="0 0 6 9"><path d="M0.7 0.7 L5 4.5 L0.7 8.3 Z" fill="#fff" stroke="#777" stroke-width="0.9"/></svg><div style="position:absolute;left:407px;top:1218px;width:1319px;height:1px;background:#e2e2e2"></div><svg style="position:absolute;left:413px;top:1222px" width="20" height="22" viewBox="0 0 20 22"><rect x="1.5" y="4.5" width="17" height="16" rx="1" fill="#fff" stroke="#34609a"/><rect x="6" y="1.5" width="8" height="4" rx="1" fill="#f5c242" stroke="#c89522"/><path d="M5 12 L9 16 L15 7" stroke="#1fae2b" stroke-width="3" fill="none"/></svg><div class="t" style="left:440px;top:1222px;font-size:13px;line-height:16px;color:#3a3a3a;font-weight:normal;font-style:normal;">Preparing solution ‘LED_Blinking’</div><div class="t" style="left:440px;top:1240px;font-size:10px;line-height:12px;color:#555;font-weight:normal;font-style:normal;">Completed</div><svg style="position:absolute;left:427px;top:1237px" width="6" height="9" viewBox="0 0 6 9"><path d="M0.7 0.7 L5 4.5 L0.7 8.3 Z" fill="#fff" stroke="#777" stroke-width="0.9"/></svg><div style="position:absolute;left:407px;top:1256px;width:1319px;height:1px;background:#e2e2e2"></div><svg style="position:absolute;left:413px;top:1260px" width="20" height="22" viewBox="0 0 20 22"><rect x="1.5" y="4.5" width="17" height="16" rx="1" fill="#fff" stroke="#34609a"/><rect x="6" y="1.5" width="8" height="4" rx="1" fill="#f5c242" stroke="#c89522"/><path d="M5 12 L9 16 L15 7" stroke="#1fae2b" stroke-width="3" fill="none"/></svg><div class="t" style="left:440px;top:1260px;font-size:13px;line-height:16px;color:#3a3a3a;font-weight:normal;font-style:normal;">Restoring state from previous session</div><div class="t" style="left:440px;top:1278px;font-size:10px;line-height:12px;color:#555;font-weight:normal;font-style:normal;">Completed</div><svg style="position:absolute;left:427px;top:1275px" width="6" height="9" viewBox="0 0 6 9"><path d="M0.7 0.7 L5 4.5 L0.7 8.3 Z" fill="#fff" stroke="#777" stroke-width="0.9"/></svg><div style="position:absolute;left:407px;top:1294px;width:1319px;height:1px;background:#e2e2e2"></div><svg style="position:absolute;left:413px;top:1298px" width="20" height="22" viewBox="0 0 20 22"><rect x="1.5" y="4.5" width="17" height="16" rx="1" fill="#fff" stroke="#34609a"/><rect x="6" y="1.5" width="8" height="4" rx="1" fill="#f5c242" stroke="#c89522"/><path d="M5 12 L9 16 L15 7" stroke="#1fae2b" stroke-width="3" fill="none"/></svg><div class="t" style="left:440px;top:1298px;font-size:13px;line-height:16px;color:#3a3a3a;font-weight:normal;font-style:normal;">CrossStudio is ready to use</div><div class="t" style="left:440px;top:1316px;font-size:10px;line-height:12px;color:#555;font-weight:normal;font-style:normal;">Completed</div><div class="t" style="left:1556px;top:1149px;font-size:10px;line-height:12px;color:#555;font-weight:normal;font-style:normal;">6 files in 0.0s</div><div class="t" style="left:1556px;top:1163px;font-size:10px;line-height:12px;color:#555;font-weight:normal;font-style:normal;">6000 files/s</div><div style="position:absolute;left:1749px;top:38px;width:802px;height:533px;box-sizing:border-box;border:1px solid #9c9ca0;background:#fff"></div><div style="position:absolute;left:1750px;top:39px;width:801px;height:70px;background:#e8e8e8"></div><div class="pill" style="left:1754px;top:45px;width:105px;">Project Explorer</div><svg style="position:absolute;left:2536px;top:50px" width="12" height="12" viewBox="0 0 12 12"><path d="M2 2 L10 10 M10 2 L2 10" stroke="#25282b" stroke-width="2.5" stroke-linecap="round"/></svg><div style="position:absolute;left:1754px;top:81px;width:175px;height:20px;box-sizing:border-box;border:1px solid #c2c2c2;border-radius:4px;background:#f3f3f3"></div><div class="t" style="left:1757px;top:84px;font-size:13px;line-height:16px;color:#333;font-weight:normal;font-style:normal;">No Configurations</div><svg style="position:absolute;left:1916px;top:84px" width="9" height="14" viewBox="0 0 9 14"><path d="M1.5 5 L4.5 2 L7.5 5 M1.5 9 L4.5 12 L7.5 9" stroke="#666" stroke-width="1.1" fill="none"/></svg><div style="position:absolute;left:2542px;top:109px;width:9px;height:461px;background:#f9f9f9;border-left:1px solid #ececec;box-sizing:border-box"></div><div style="position:absolute;left:1750px;top:109px;width:792px;height:23px;background:#e8e8e8"></div><div style="position:absolute;left:1750px;top:109px;width:792px;height:1px;background:#fdfdfd"></div><div style="position:absolute;left:1750px;top:131px;width:792px;height:1px;background:#c2c2c2"></div><div style="position:absolute;left:2541px;top:109px;width:1px;height:23px;background:#c2c2c2"></div><div style="position:absolute;left:2391px;top:109px;width:1px;height:22px;background:#c2c2c2"></div><div style="position:absolute;left:2392px;top:110px;width:1px;height:21px;background:#fdfdfd"></div><div style="position:absolute;left:2466px;top:109px;width:1px;height:22px;background:#c2c2c2"></div><div style="position:absolute;left:2467px;top:110px;width:1px;height:21px;background:#fdfdfd"></div><div style="position:absolute;left:1750px;top:110px;width:1px;height:21px;background:#fdfdfd"></div><div style="position:absolute;left:2541px;top:555px;width:10px;height:15px;background:#e8e8e8"></div><div class="t" style="left:1754px;top:113px;font-size:13px;line-height:16px;color:#000;font-weight:normal;font-style:normal;">Project Items</div><div class="t" style="left:2412px;top:113px;font-size:13px;line-height:16px;color:#000;font-weight:normal;font-style:normal;">Code</div><div class="t" style="left:2491px;top:113px;font-size:13px;line-height:16px;color:#000;font-weight:normal;font-style:normal;">Data</div><div style="position:absolute;left:2100px;top:332px;width:92px;height:36px;border-radius:7px;background:#e5e5e5"></div><div class="t" style="left:2116px;top:343px;font-size:13px;line-height:16px;color:#555;font-weight:normal;font-style:normal;">No project</div><div style="position:absolute;left:1749px;top:578px;width:802px;height:354px;box-sizing:border-box;border:1px solid #9c9ca0;background:#fff"></div><div style="position:absolute;left:1750px;top:579px;width:801px;height:70px;background:#e8e8e8"></div><div class="pill" style="left:1754px;top:585px;width:54px;">Targets</div><svg style="position:absolute;left:2536px;top:590px" width="12" height="12" viewBox="0 0 12 12"><path d="M2 2 L10 10 M10 2 L2 10" stroke="#25282b" stroke-width="2.5" stroke-linecap="round"/></svg><svg style="position:absolute;left:1853px;top:616px" width="2" height="29"><rect x="0" y="0" width="1.3" height="1.3" fill="#555"/><rect x="0" y="3" width="1.3" height="1.3" fill="#555"/><rect x="0" y="6" width="1.3" height="1.3" fill="#555"/><rect x="0" y="9" width="1.3" height="1.3" fill="#555"/><rect x="0" y="12" width="1.3" height="1.3" fill="#555"/><rect x="0" y="15" width="1.3" height="1.3" fill="#555"/><rect x="0" y="18" width="1.3" height="1.3" fill="#555"/><rect x="0" y="21" width="1.3" height="1.3" fill="#555"/><rect x="0" y="24" width="1.3" height="1.3" fill="#555"/><rect x="0" y="27" width="1.3" height="1.3" fill="#555"/></svg><svg style="position:absolute;left:1897px;top:616px" width="2" height="29"><rect x="0" y="0" width="1.3" height="1.3" fill="#555"/><rect x="0" y="3" width="1.3" height="1.3" fill="#555"/><rect x="0" y="6" width="1.3" height="1.3" fill="#555"/><rect x="0" y="9" width="1.3" height="1.3" fill="#555"/><rect x="0" y="12" width="1.3" height="1.3" fill="#555"/><rect x="0" y="15" width="1.3" height="1.3" fill="#555"/><rect x="0" y="18" width="1.3" height="1.3" fill="#555"/><rect x="0" y="21" width="1.3" height="1.3" fill="#555"/><rect x="0" y="24" width="1.3" height="1.3" fill="#555"/><rect x="0" y="27" width="1.3" height="1.3" fill="#555"/></svg><div style="position:absolute;left:2541px;top:649px;width:10px;height:267px;background:#f9f9f9"></div><div style="position:absolute;left:2543px;top:650px;width:9px;height:151px;background:#c2c2c2;border-radius:4px"></div><div style="position:absolute;left:1750px;top:916px;width:791px;height:15px;background:#f7f7f7;border-top:1px solid #e6e6e6;box-sizing:border-box"></div><div style="position:absolute;left:2541px;top:916px;width:10px;height:15px;background:#e8e8e8"></div><div style="position:absolute;left:1750px;top:703px;width:791px;height:18px;background:#dce8f8"></div><svg style="position:absolute;left:1753px;top:650px" width="16" height="16" viewBox="0 0 16 16"><defs><radialGradient id="sg" cx="0.45" cy="0.42" r="0.65"><stop offset="0" stop-color="#fff27a"/><stop offset="0.45" stop-color="#ffc21c"/><stop offset="1" stop-color="#ff8400"/></radialGradient></defs><path d="M8 0.6 L10.4 5.7 L15.8 6.2 L11.9 10 L13.6 15.6 L8 12.6 L2.4 15.6 L4.1 10 L0.2 6.2 L5.6 5.7 Z" fill="url(#sg)" stroke="#f29a10" stroke-width="0.5" stroke-linejoin="round"/></svg><div class="t" style="left:1774px;top:651px;font-size:13px;line-height:16px;color:#000;font-weight:normal;font-style:normal;">ARM Simulator</div><svg style="position:absolute;left:1753px;top:668px" width="16" height="16" viewBox="0 0 16 16"><defs><radialGradient id="sg" cx="0.45" cy="0.42" r="0.65"><stop offset="0" stop-color="#fff27a"/><stop offset="0.45" stop-color="#ffc21c"/><stop offset="1" stop-color="#ff8400"/></radialGradient></defs><path d="M8 0.6 L10.4 5.7 L15.8 6.2 L11.9 10 L13.6 15.6 L8 12.6 L2.4 15.6 L4.1 10 L0.2 6.2 L5.6 5.7 Z" fill="url(#sg)" stroke="#f29a10" stroke-width="0.5" stroke-linejoin="round"/></svg><div class="t" style="left:1774px;top:669px;font-size:13px;line-height:16px;color:#000;font-weight:normal;font-style:normal;">CMSIS-DAP</div><svg style="position:absolute;left:1753px;top:686px" width="16" height="16" viewBox="0 0 16 16"><defs><radialGradient id="sg" cx="0.45" cy="0.42" r="0.65"><stop offset="0" stop-color="#fff27a"/><stop offset="0.45" stop-color="#ffc21c"/><stop offset="1" stop-color="#ff8400"/></radialGradient></defs><path d="M8 0.6 L10.4 5.7 L15.8 6.2 L11.9 10 L13.6 15.6 L8 12.6 L2.4 15.6 L4.1 10 L0.2 6.2 L5.6 5.7 Z" fill="url(#sg)" stroke="#f29a10" stroke-width="0.5" stroke-linejoin="round"/></svg><div class="t" style="left:1774px;top:687px;font-size:13px;line-height:16px;color:#000;font-weight:normal;font-style:normal;">CrossConnect for ARM</div><svg style="position:absolute;left:1753px;top:704px" width="16" height="16" viewBox="0 0 16 16"><defs><radialGradient id="sg" cx="0.45" cy="0.42" r="0.65"><stop offset="0" stop-color="#fff27a"/><stop offset="0.45" stop-color="#ffc21c"/><stop offset="1" stop-color="#ff8400"/></radialGradient></defs><path d="M8 0.6 L10.4 5.7 L15.8 6.2 L11.9 10 L13.6 15.6 L8 12.6 L2.4 15.6 L4.1 10 L0.2 6.2 L5.6 5.7 Z" fill="url(#sg)" stroke="#f29a10" stroke-width="0.5" stroke-linejoin="round"/></svg><div class="t" style="left:1774px;top:705px;font-size:13px;line-height:16px;color:#000;font-weight:normal;font-style:normal;">SEGGER J-Link</div><svg style="position:absolute;left:1753px;top:722px" width="16" height="16" viewBox="0 0 16 16"><defs><radialGradient id="sg" cx="0.45" cy="0.42" r="0.65"><stop offset="0" stop-color="#fff27a"/><stop offset="0.45" stop-color="#ffc21c"/><stop offset="1" stop-color="#ff8400"/></radialGradient></defs><path d="M8 0.6 L10.4 5.7 L15.8 6.2 L11.9 10 L13.6 15.6 L8 12.6 L2.4 15.6 L4.1 10 L0.2 6.2 L5.6 5.7 Z" fill="url(#sg)" stroke="#f29a10" stroke-width="0.5" stroke-linejoin="round"/></svg><div class="t" style="left:1774px;top:723px;font-size:13px;line-height:16px;color:#000;font-weight:normal;font-style:normal;">ST-LINK/V2</div><svg style="position:absolute;left:1753px;top:740px" width="17" height="17" viewBox="0 0 17 17"><path d="M4 6.5 H12.5 M4 9 H12.5" stroke="#000" stroke-width="1.2"/><rect x="4" y="7" width="9" height="1.6" fill="#888"/><rect x="0.8" y="4.6" width="3.8" height="6.6" rx="1" fill="#999" stroke="#000" stroke-width="1.2"/><path d="M11.5 4.5 L15.8 7.8 L11.5 11 Z" fill="#888" stroke="#000" stroke-width="1.1" stroke-linejoin="round"/><path d="M4.5 5 L7 2.2" stroke="#000" stroke-width="1.2"/><circle cx="8.5" cy="2.2" r="1.6" fill="#bbb" stroke="#000" stroke-width="1.1"/><path d="M6.2 9.5 V11.5 L9 13.8" stroke="#000" stroke-width="1.2" fill="none"/><rect x="9.3" y="12.3" width="3.4" height="3.4" fill="#bbb" stroke="#000" stroke-width="1.2"/></svg><div class="t" style="left:1774px;top:741px;font-size:13px;line-height:16px;color:#000;font-weight:normal;font-style:normal;">Amontec JTAGkey</div><svg style="position:absolute;left:1753px;top:758px" width="17" height="17" viewBox="0 0 17 17"><path d="M4 6.5 H12.5 M4 9 H12.5" stroke="#000" stroke-width="1.2"/><rect x="4" y="7" width="9" height="1.6" fill="#888"/><rect x="0.8" y="4.6" width="3.8" height="6.6" rx="1" fill="#999" stroke="#000" stroke-width="1.2"/><path d="M11.5 4.5 L15.8 7.8 L11.5 11 Z" fill="#888" stroke="#000" stroke-width="1.1" stroke-linejoin="round"/><path d="M4.5 5 L7 2.2" stroke="#000" stroke-width="1.2"/><circle cx="8.5" cy="2.2" r="1.6" fill="#bbb" stroke="#000" stroke-width="1.1"/><path d="M6.2 9.5 V11.5 L9 13.8" stroke="#000" stroke-width="1.2" fill="none"/><rect x="9.3" y="12.3" width="3.4" height="3.4" fill="#bbb" stroke="#000" stroke-width="1.2"/></svg><div class="t" style="left:1774px;top:759px;font-size:13px;line-height:16px;color:#000;font-weight:normal;font-style:normal;">CodeRed Red Probe</div><svg style="position:absolute;left:1753px;top:776px" width="17" height="17" viewBox="0 0 17 17"><path d="M4 6.5 H12.5 M4 9 H12.5" stroke="#000" stroke-width="1.2"/><rect x="4" y="7" width="9" height="1.6" fill="#888"/><rect x="0.8" y="4.6" width="3.8" height="6.6" rx="1" fill="#999" stroke="#000" stroke-width="1.2"/><path d="M11.5 4.5 L15.8 7.8 L11.5 11 Z" fill="#888" stroke="#000" stroke-width="1.1" stroke-linejoin="round"/><path d="M4.5 5 L7 2.2" stroke="#000" stroke-width="1.2"/><circle cx="8.5" cy="2.2" r="1.6" fill="#bbb" stroke="#000" stroke-width="1.1"/><path d="M6.2 9.5 V11.5 L9 13.8" stroke="#000" stroke-width="1.2" fill="none"/><rect x="9.3" y="12.3" width="3.4" height="3.4" fill="#bbb" stroke="#000" stroke-width="1.2"/></svg><div class="t" style="left:1774px;top:777px;font-size:13px;line-height:16px;color:#000;font-weight:normal;font-style:normal;">CodeRed Red Probe+</div><svg style="position:absolute;left:1753px;top:794px" width="17" height="17" viewBox="0 0 17 17"><path d="M4 6.5 H12.5 M4 9 H12.5" stroke="#000" stroke-width="1.2"/><rect x="4" y="7" width="9" height="1.6" fill="#888"/><rect x="0.8" y="4.6" width="3.8" height="6.6" rx="1" fill="#999" stroke="#000" stroke-width="1.2"/><path d="M11.5 4.5 L15.8 7.8 L11.5 11 Z" fill="#888" stroke="#000" stroke-width="1.1" stroke-linejoin="round"/><path d="M4.5 5 L7 2.2" stroke="#000" stroke-width="1.2"/><circle cx="8.5" cy="2.2" r="1.6" fill="#bbb" stroke="#000" stroke-width="1.1"/><path d="M6.2 9.5 V11.5 L9 13.8" stroke="#000" stroke-width="1.2" fill="none"/><rect x="9.3" y="12.3" width="3.4" height="3.4" fill="#bbb" stroke="#000" stroke-width="1.2"/></svg><div class="t" style="left:1774px;top:795px;font-size:13px;line-height:16px;color:#000;font-weight:normal;font-style:normal;">DISTORTEC JTAG-lock-pick Tiny 2</div><svg style="position:absolute;left:1753px;top:812px" width="17" height="17" viewBox="0 0 17 17"><path d="M4 6.5 H12.5 M4 9 H12.5" stroke="#000" stroke-width="1.2"/><rect x="4" y="7" width="9" height="1.6" fill="#888"/><rect x="0.8" y="4.6" width="3.8" height="6.6" rx="1" fill="#999" stroke="#000" stroke-width="1.2"/><path d="M11.5 4.5 L15.8 7.8 L11.5 11 Z" fill="#888" stroke="#000" stroke-width="1.1" stroke-linejoin="round"/><path d="M4.5 5 L7 2.2" stroke="#000" stroke-width="1.2"/><circle cx="8.5" cy="2.2" r="1.6" fill="#bbb" stroke="#000" stroke-width="1.1"/><path d="M6.2 9.5 V11.5 L9 13.8" stroke="#000" stroke-width="1.2" fill="none"/><rect x="9.3" y="12.3" width="3.4" height="3.4" fill="#bbb" stroke="#000" stroke-width="1.2"/></svg><div class="t" style="left:1774px;top:813px;font-size:13px;line-height:16px;color:#000;font-weight:normal;font-style:normal;">Hitex Stick</div><svg style="position:absolute;left:1753px;top:830px" width="17" height="17" viewBox="0 0 17 17"><path d="M4 6.5 H12.5 M4 9 H12.5" stroke="#000" stroke-width="1.2"/><rect x="4" y="7" width="9" height="1.6" fill="#888"/><rect x="0.8" y="4.6" width="3.8" height="6.6" rx="1" fill="#999" stroke="#000" stroke-width="1.2"/><path d="M11.5 4.5 L15.8 7.8 L11.5 11 Z" fill="#888" stroke="#000" stroke-width="1.1" stroke-linejoin="round"/><path d="M4.5 5 L7 2.2" stroke="#000" stroke-width="1.2"/><circle cx="8.5" cy="2.2" r="1.6" fill="#bbb" stroke="#000" stroke-width="1.1"/><path d="M6.2 9.5 V11.5 L9 13.8" stroke="#000" stroke-width="1.2" fill="none"/><rect x="9.3" y="12.3" width="3.4" height="3.4" fill="#bbb" stroke="#000" stroke-width="1.2"/></svg><div class="t" style="left:1774px;top:831px;font-size:13px;line-height:16px;color:#000;font-weight:normal;font-style:normal;">Kinetis OSJTAG</div><svg style="position:absolute;left:1753px;top:848px" width="17" height="17" viewBox="0 0 17 17"><path d="M4 6.5 H12.5 M4 9 H12.5" stroke="#000" stroke-width="1.2"/><rect x="4" y="7" width="9" height="1.6" fill="#888"/><rect x="0.8" y="4.6" width="3.8" height="6.6" rx="1" fill="#999" stroke="#000" stroke-width="1.2"/><path d="M11.5 4.5 L15.8 7.8 L11.5 11 Z" fill="#888" stroke="#000" stroke-width="1.1" stroke-linejoin="round"/><path d="M4.5 5 L7 2.2" stroke="#000" stroke-width="1.2"/><circle cx="8.5" cy="2.2" r="1.6" fill="#bbb" stroke="#000" stroke-width="1.1"/><path d="M6.2 9.5 V11.5 L9 13.8" stroke="#000" stroke-width="1.2" fill="none"/><rect x="9.3" y="12.3" width="3.4" height="3.4" fill="#bbb" stroke="#000" stroke-width="1.2"/></svg><div class="t" style="left:1774px;top:849px;font-size:13px;line-height:16px;color:#000;font-weight:normal;font-style:normal;">KrisTech KT-LINK</div><svg style="position:absolute;left:1753px;top:866px" width="17" height="17" viewBox="0 0 17 17"><path d="M4 6.5 H12.5 M4 9 H12.5" stroke="#000" stroke-width="1.2"/><rect x="4" y="7" width="9" height="1.6" fill="#888"/><rect x="0.8" y="4.6" width="3.8" height="6.6" rx="1" fill="#999" stroke="#000" stroke-width="1.2"/><path d="M11.5 4.5 L15.8 7.8 L11.5 11 Z" fill="#888" stroke="#000" stroke-width="1.1" stroke-linejoin="round"/><path d="M4.5 5 L7 2.2" stroke="#000" stroke-width="1.2"/><circle cx="8.5" cy="2.2" r="1.6" fill="#bbb" stroke="#000" stroke-width="1.1"/><path d="M6.2 9.5 V11.5 L9 13.8" stroke="#000" stroke-width="1.2" fill="none"/><rect x="9.3" y="12.3" width="3.4" height="3.4" fill="#bbb" stroke="#000" stroke-width="1.2"/></svg><div class="t" style="left:1774px;top:867px;font-size:13px;line-height:16px;color:#000;font-weight:normal;font-style:normal;">Luminary USB Debug</div><svg style="position:absolute;left:1753px;top:884px" width="17" height="17" viewBox="0 0 17 17"><path d="M4 6.5 H12.5 M4 9 H12.5" stroke="#000" stroke-width="1.2"/><rect x="4" y="7" width="9" height="1.6" fill="#888"/><rect x="0.8" y="4.6" width="3.8" height="6.6" rx="1" fill="#999" stroke="#000" stroke-width="1.2"/><path d="M11.5 4.5 L15.8 7.8 L11.5 11 Z" fill="#888" stroke="#000" stroke-width="1.1" stroke-linejoin="round"/><path d="M4.5 5 L7 2.2" stroke="#000" stroke-width="1.2"/><circle cx="8.5" cy="2.2" r="1.6" fill="#bbb" stroke="#000" stroke-width="1.1"/><path d="M6.2 9.5 V11.5 L9 13.8" stroke="#000" stroke-width="1.2" fill="none"/><rect x="9.3" y="12.3" width="3.4" height="3.4" fill="#bbb" stroke="#000" stroke-width="1.2"/></svg><div class="t" style="left:1774px;top:885px;font-size:13px;line-height:16px;color:#000;font-weight:normal;font-style:normal;">NGX ARM USB JTAG</div><svg style="position:absolute;left:1753px;top:902px" width="17" height="17" viewBox="0 0 17 17"><path d="M4 6.5 H12.5 M4 9 H12.5" stroke="#000" stroke-width="1.2"/><rect x="4" y="7" width="9" height="1.6" fill="#888"/><rect x="0.8" y="4.6" width="3.8" height="6.6" rx="1" fill="#999" stroke="#000" stroke-width="1.2"/><path d="M11.5 4.5 L15.8 7.8 L11.5 11 Z" fill="#888" stroke="#000" stroke-width="1.1" stroke-linejoin="round"/><path d="M4.5 5 L7 2.2" stroke="#000" stroke-width="1.2"/><circle cx="8.5" cy="2.2" r="1.6" fill="#bbb" stroke="#000" stroke-width="1.1"/><path d="M6.2 9.5 V11.5 L9 13.8" stroke="#000" stroke-width="1.2" fill="none"/><rect x="9.3" y="12.3" width="3.4" height="3.4" fill="#bbb" stroke="#000" stroke-width="1.2"/></svg><div class="t" style="left:1774px;top:903px;font-size:13px;line-height:16px;color:#000;font-weight:normal;font-style:normal;">Olimex ARM-USB-OCD</div><div style="position:absolute;left:1749px;top:939px;width:802px;height:478px;box-sizing:border-box;border:1px solid #9c9ca0;background:#fff"></div><div style="position:absolute;left:1750px;top:940px;width:801px;height:62px;background:#e8e8e8"></div><div style="position:absolute;left:1750px;top:940px;width:3px;height:476px;background:#e8e8e8"></div><div class="pill" style="left:1754px;top:946px;width:122px;">Properties Window</div><svg style="position:absolute;left:2536px;top:951px" width="12" height="12" viewBox="0 0 12 12"><path d="M2 2 L10 10 M10 2 L2 10" stroke="#25282b" stroke-width="2.5" stroke-linecap="round"/></svg><div style="position:absolute;left:2402px;top:976px;width:150px;height:23px;box-sizing:border-box;border:1px solid #b8b8b8;background:#fff"></div><div class="t" style="left:2405px;top:980px;font-size:13px;line-height:16px;color:#8a8a8a;font-weight:normal;font-style:italic;">Search Properties</div><div style="position:absolute;left:1753px;top:1001px;width:786px;height:23px;background:#e8e8e8"></div><div style="position:absolute;left:1753px;top:1001px;width:786px;height:1px;background:#fdfdfd"></div><div style="position:absolute;left:1753px;top:1023px;width:786px;height:1px;background:#c2c2c2"></div><div style="position:absolute;left:2538px;top:1001px;width:1px;height:23px;background:#c2c2c2"></div><div style="position:absolute;left:2161px;top:1001px;width:1px;height:22px;background:#c2c2c2"></div><div style="position:absolute;left:2162px;top:1002px;width:1px;height:21px;background:#fdfdfd"></div><div style="position:absolute;left:1753px;top:1002px;width:1px;height:21px;background:#fdfdfd"></div><div class="t" style="left:1757px;top:1005px;font-size:13px;line-height:16px;color:#000;font-weight:normal;font-style:normal;">Target Properties</div><div class="t" style="left:2166px;top:1005px;font-size:13px;line-height:16px;color:#000;font-weight:normal;font-style:normal;">Setting</div><div style="position:absolute;left:1753px;top:1024px;width:786px;height:34px;background:linear-gradient(#fdeaa9,#fdd466)"></div><svg style="position:absolute;left:1762px;top:1044px" width="7" height="7" viewBox="0 0 7 7"><path d="M6.5 0.5 L6.5 6.5 L0.5 6.5 Z" fill="#444"/></svg><div style="position:absolute;left:1780px;top:1043px;width:9px;height:9px;background:#10107a"></div><div class="t" style="left:1802px;top:1040px;font-size:13px;line-height:16px;color:#000;font-weight:bold;font-style:normal;">J-Link</div><div style="position:absolute;left:1773px;top:1065px;width:5px;height:5px;border-radius:2.5px;background:#777"></div><div class="t" style="left:1788px;top:1061px;font-size:13px;line-height:16px;color:#000;font-weight:normal;font-style:normal;">Additional J-Link Options</div><div style="position:absolute;left:1753px;top:1076px;width:786px;height:1px;background:#e0e0e0"></div><div style="position:absolute;left:1773px;top:1083px;width:5px;height:5px;border-radius:2.5px;background:#777"></div><div class="t" style="left:1788px;top:1079px;font-size:13px;line-height:16px;color:#000;font-weight:normal;font-style:normal;">Enable Adaptive Clocking</div><div class="t" style="left:2166px;top:1079px;font-size:13px;line-height:16px;color:#000;font-weight:normal;font-style:normal;">Yes</div><div style="position:absolute;left:1753px;top:1094px;width:786px;height:1px;background:#e0e0e0"></div><div style="position:absolute;left:1773px;top:1101px;width:5px;height:5px;border-radius:2.5px;background:#777"></div><div class="t" style="left:1788px;top:1097px;font-size:13px;line-height:16px;color:#000;font-weight:normal;font-style:normal;">Exclude Flash Cache Range</div><div class="t" style="left:2166px;top:1097px;font-size:13px;line-height:16px;color:#000;font-weight:normal;font-style:italic;">None</div><div style="position:absolute;left:1753px;top:1112px;width:786px;height:1px;background:#e0e0e0"></div><div style="position:absolute;left:1773px;top:1119px;width:5px;height:5px;border-radius:2.5px;background:#777"></div><div class="t" style="left:1788px;top:1115px;font-size:13px;line-height:16px;color:#000;font-weight:normal;font-style:normal;">J-Link DLL File</div><div class="t" style="left:2166px;top:1115px;font-size:13px;line-height:16px;color:#000;font-weight:normal;font-style:normal;">libjlinkarm.dylib</div><div style="position:absolute;left:1753px;top:1130px;width:786px;height:1px;background:#e0e0e0"></div><div style="position:absolute;left:1773px;top:1137px;width:5px;height:5px;border-radius:2.5px;background:#777"></div><div class="t" style="left:1788px;top:1133px;font-size:13px;line-height:16px;color:#000;font-weight:normal;font-style:normal;">Log File</div><div class="t" style="left:2166px;top:1133px;font-size:13px;line-height:16px;color:#000;font-weight:normal;font-style:italic;">None</div><div style="position:absolute;left:1753px;top:1148px;width:786px;height:1px;background:#e0e0e0"></div><div style="position:absolute;left:1773px;top:1155px;width:5px;height:5px;border-radius:2.5px;background:#777"></div><div class="t" style="left:1788px;top:1151px;font-size:13px;line-height:16px;color:#000;font-weight:normal;font-style:normal;">Reset Type</div><div class="t" style="left:2166px;top:1151px;font-size:13px;line-height:16px;color:#000;font-weight:normal;font-style:normal;">Default</div><div style="position:absolute;left:1753px;top:1166px;width:786px;height:1px;background:#e0e0e0"></div><div style="position:absolute;left:1773px;top:1173px;width:5px;height:5px;border-radius:2.5px;background:#777"></div><div class="t" style="left:1788px;top:1169px;font-size:13px;line-height:16px;color:#000;font-weight:normal;font-style:normal;">Script File</div><div class="t" style="left:2166px;top:1169px;font-size:13px;line-height:16px;color:#000;font-weight:normal;font-style:italic;">None</div><div style="position:absolute;left:1753px;top:1184px;width:786px;height:1px;background:#e0e0e0"></div><div style="position:absolute;left:1773px;top:1191px;width:5px;height:5px;border-radius:2.5px;background:#777"></div><div class="t" style="left:1788px;top:1187px;font-size:13px;line-height:16px;color:#000;font-weight:normal;font-style:normal;">Settings File</div><div class="t" style="left:2166px;top:1187px;font-size:13px;line-height:16px;color:#000;font-weight:normal;font-style:italic;">None</div><div style="position:absolute;left:1753px;top:1202px;width:786px;height:1px;background:#e0e0e0"></div><div style="position:absolute;left:1773px;top:1209px;width:5px;height:5px;border-radius:2.5px;background:#777"></div><div class="t" style="left:1788px;top:1205px;font-size:13px;line-height:16px;color:#000;font-weight:normal;font-style:normal;">Show Log Messages In Output Window</div><div class="t" style="left:2166px;top:1205px;font-size:13px;line-height:16px;color:#000;font-weight:normal;font-style:normal;">Yes</div><div style="position:absolute;left:1753px;top:1220px;width:786px;height:1px;background:#e0e0e0"></div><div style="position:absolute;left:1773px;top:1227px;width:5px;height:5px;border-radius:2.5px;background:#777"></div><div class="t" style="left:1788px;top:1223px;font-size:13px;line-height:16px;color:#000;font-weight:normal;font-style:normal;">Speed</div><div class="t" style="left:2166px;top:1223px;font-size:13px;line-height:16px;color:#000;font-weight:normal;font-style:normal;">4,000 kHz</div><div style="position:absolute;left:1753px;top:1238px;width:786px;height:1px;background:#e0e0e0"></div><div style="position:absolute;left:1773px;top:1245px;width:5px;height:5px;border-radius:2.5px;background:#777"></div><div class="t" style="left:1788px;top:1241px;font-size:13px;line-height:16px;color:#000;font-weight:normal;font-style:normal;">Supply Power</div><div class="t" style="left:2166px;top:1241px;font-size:13px;line-height:16px;color:#000;font-weight:normal;font-style:normal;">No</div><div style="position:absolute;left:1753px;top:1256px;width:786px;height:1px;background:#e0e0e0"></div><div style="position:absolute;left:1773px;top:1263px;width:5px;height:5px;border-radius:2.5px;background:#777"></div><div class="t" style="left:1788px;top:1259px;font-size:13px;line-height:16px;color:#000;font-weight:normal;font-style:normal;">Trace Buffer Size</div><div class="t" style="left:2166px;top:1259px;font-size:13px;line-height:16px;color:#000;font-weight:normal;font-style:normal;">65,536 Bytes</div><div style="position:absolute;left:1753px;top:1274px;width:786px;height:1px;background:#e0e0e0"></div><div style="position:absolute;left:1773px;top:1281px;width:5px;height:5px;border-radius:2.5px;background:#777"></div><div class="t" style="left:1788px;top:1277px;font-size:13px;line-height:16px;color:#000;font-weight:normal;font-style:normal;">Use Built-in Flash Loader</div><div class="t" style="left:2166px;top:1277px;font-size:13px;line-height:16px;color:#000;font-weight:normal;font-style:normal;">Auto</div><div style="position:absolute;left:1753px;top:1292px;width:786px;height:1px;background:#e0e0e0"></div><div style="position:absolute;left:1773px;top:1299px;width:5px;height:5px;border-radius:2.5px;background:#777"></div><div class="t" style="left:1788px;top:1295px;font-size:13px;line-height:16px;color:#000;font-weight:normal;font-style:normal;">Use Built-in RTT support</div><div class="t" style="left:2166px;top:1295px;font-size:13px;line-height:16px;color:#000;font-weight:normal;font-style:normal;">Auto</div><div style="position:absolute;left:1753px;top:1310px;width:786px;height:1px;background:#e0e0e0"></div><div style="position:absolute;left:1773px;top:1317px;width:5px;height:5px;border-radius:2.5px;background:#777"></div><div class="t" style="left:1788px;top:1313px;font-size:13px;line-height:16px;color:#000;font-weight:normal;font-style:normal;">Verify Read Operations</div><div class="t" style="left:2166px;top:1313px;font-size:13px;line-height:16px;color:#000;font-weight:normal;font-style:normal;">No</div><div style="position:absolute;left:1753px;top:1328px;width:786px;height:1px;background:#e0e0e0"></div><div style="position:absolute;left:2161px;top:1058px;width:1px;height:270px;background:#e0e0e0"></div><svg style="position:absolute;left:1762px;top:1351px" width="7" height="7" viewBox="0 0 7 7"><path d="M6.5 0.5 L6.5 6.5 L0.5 6.5 Z" fill="#444"/></svg><div style="position:absolute;left:1780px;top:1350px;width:9px;height:9px;background:#10107a"></div><div class="t" style="left:1802px;top:1347px;font-size:13px;line-height:16px;color:#000;font-weight:bold;font-style:normal;">Target</div><div style="position:absolute;left:2539px;top:1001px;width:12px;height:400px;background:#f9f9f9"></div><div style="position:absolute;left:2543px;top:1002px;width:9px;height:325px;background:#c2c2c2;border-radius:4px"></div><div style="position:absolute;left:1753px;top:1369px;width:789px;height:1px;background:#ececec"></div><div class="t" style="left:1757px;top:1371px;font-size:13px;line-height:16px;color:#000;font-weight:normal;font-style:normal;">The JTAG/SWD clock frequency the J-Link is currently using.</div><div style="position:absolute;left:1753px;top:1401px;width:789px;height:15px;background:#f7f7f7;border-top:1px solid #e6e6e6;box-sizing:border-box"></div><div class="t" style="left:2054px;top:1423px;font-size:13px;line-height:16px;color:#000;font-weight:normal;font-style:normal;">Disconnected (SEGGER J-Link)</div><svg style="position:absolute;left:2251px;top:1422px" width="14" height="14" viewBox="0 0 14 14"><circle cx="7" cy="7" r="6.5" fill="#1fa83a"/><path d="M3 7 H10 M7 4 L10 7 L7 10" stroke="#fff" stroke-width="1.8" fill="none"/></svg><div class="t" style="left:2270px;top:1423px;font-size:13px;line-height:16px;color:#000;font-weight:normal;font-style:normal;">Built OK</div><div class="t" style="left:2340px;top:1423px;font-size:13px;line-height:16px;color:#000;font-weight:normal;font-style:normal;">INS</div><div class="t" style="left:2417px;top:1423px;font-size:13px;line-height:16px;color:#000;font-weight:normal;font-style:normal;">(No editor)</div><svg width="0" height="0" style="position:absolute"><defs><pattern id="chk2" width="2" height="2" patternUnits="userSpaceOnUse"><rect width="2" height="2" fill="#ececec"/><rect width="1" height="1" fill="#fafafa"/><rect x="1" y="1" width="1" height="1" fill="#fafafa"/></pattern></defs></svg><svg style="position:absolute;left:291px;top:40px" width="31" height="31" viewBox="291 40 31 31"><rect x="291" y="40" width="31" height="31" fill="url(#chk2)"/><path d="M291.5 71 V40.5 H322" stroke="#b8b8b8" fill="none"/></svg><svg style="position:absolute;left:298px;top:46px" width="20" height="20" viewBox="298 46 20 20"><rect x="306.5" y="53.5" width="8" height="10" fill="#fff" stroke="#000"/><rect x="306" y="53" width="9" height="2" fill="#000080"/><path d="M309 57 L313 62" stroke="#999" stroke-width="0.8"/><rect x="300.5" y="56.5" width="6" height="7" fill="#ff0" stroke="#000"/><rect x="303.5" y="57.5" width="5" height="6" fill="#fff" stroke="#000"/><rect x="305" y="59" width="2" height="1" fill="#000080"/><rect x="305" y="61" width="2" height="1" fill="#000080"/><path d="M307 49.5 Q310 47 313 49.5" stroke="#000" fill="none" stroke-width="1"/><path d="M312 48 L314 50.5 L311.5 51 Z" fill="#000"/></svg><svg style="position:absolute;left:332px;top:49px" width="14" height="13" viewBox="332 49 14 13"><rect x="333" y="50" width="12" height="1.2" fill="#000"/><rect x="333" y="52" width="8" height="1.2" fill="#000"/><rect x="333" y="54.2" width="12" height="2.6" fill="#0000c0"/><rect x="334" y="55" width="10" height="1" fill="#7ff" /><rect x="333" y="58" width="11" height="1.2" fill="#000"/><rect x="333" y="60" width="12" height="1.2" fill="#000"/></svg><svg style="position:absolute;left:363px;top:41px" width="2" height="31" viewBox="363 41 2 31"><rect x="363" y="41" width="1.3" height="1.3" fill="#555"/><rect x="363" y="44" width="1.3" height="1.3" fill="#555"/><rect x="363" y="47" width="1.3" height="1.3" fill="#555"/><rect x="363" y="50" width="1.3" height="1.3" fill="#555"/><rect x="363" y="53" width="1.3" height="1.3" fill="#555"/><rect x="363" y="56" width="1.3" height="1.3" fill="#555"/><rect x="363" y="59" width="1.3" height="1.3" fill="#555"/><rect x="363" y="62" width="1.3" height="1.3" fill="#555"/><rect x="363" y="65" width="1.3" height="1.3" fill="#555"/><rect x="363" y="68" width="1.3" height="1.3" fill="#555"/><rect x="363" y="71" width="1.3" height="1.3" fill="#555"/></svg><svg style="position:absolute;left:1666px;top:40px" width="31" height="31" viewBox="1666 40 31 31"><rect x="1666" y="40" width="31" height="31" fill="url(#chk2)"/><path d="M1666.5 71 V40.5 H1697" stroke="#b8b8b8" fill="none"/></svg><svg style="position:absolute;left:1673px;top:47px" width="18" height="18" viewBox="1673 47 18 18"><rect x="1674" y="48" width="16" height="16" rx="2" fill="#0052aa"/><rect x="1676" y="55" width="1.6" height="1.6" fill="#fff"/><rect x="1679" y="55" width="1.6" height="1.6" fill="#fff"/><rect x="1682" y="55" width="1.6" height="1.6" fill="#fff"/><rect x="1685" y="55" width="1.6" height="1.6" fill="#fff"/><rect x="1682" y="51" width="1.6" height="1.6" fill="#fff"/><rect x="1684" y="53" width="1.6" height="1.6" fill="#fff"/><rect x="1684" y="57" width="1.6" height="1.6" fill="#fff"/><rect x="1682" y="59" width="1.6" height="1.6" fill="#fff"/></svg><svg style="position:absolute;left:1706px;top:41px" width="2" height="31" viewBox="1706 41 2 31"><rect x="1706" y="41" width="1.3" height="1.3" fill="#555"/><rect x="1706" y="44" width="1.3" height="1.3" fill="#555"/><rect x="1706" y="47" width="1.3" height="1.3" fill="#555"/><rect x="1706" y="50" width="1.3" height="1.3" fill="#555"/><rect x="1706" y="53" width="1.3" height="1.3" fill="#555"/><rect x="1706" y="56" width="1.3" height="1.3" fill="#555"/><rect x="1706" y="59" width="1.3" height="1.3" fill="#555"/><rect x="1706" y="62" width="1.3" height="1.3" fill="#555"/><rect x="1706" y="65" width="1.3" height="1.3" fill="#555"/><rect x="1706" y="68" width="1.3" height="1.3" fill="#555"/><rect x="1706" y="71" width="1.3" height="1.3" fill="#555"/></svg><svg style="position:absolute;left:1634px;top:1067px" width="31" height="31" viewBox="1634 1067 31 31"><rect x="1634" y="1067" width="31" height="31" fill="url(#chk2)"/><path d="M1634.5 1098 V1067.5 H1665" stroke="#b8b8b8" fill="none"/></svg><svg style="position:absolute;left:1641px;top:1074px" width="18" height="18" viewBox="1641 1074 18 18"><rect x="1643.5" y="1076.5" width="13" height="12" fill="#fff" stroke="#111"/><rect x="1643" y="1076" width="14" height="2" fill="#000080"/><rect x="1644" y="1087" width="12" height="1" fill="#999"/><path d="M1645 1080 Q1648 1079 1650 1082 Q1652 1079 1655 1080 V1088 Q1652 1087 1650 1089 Q1648 1087 1645 1088 Z" fill="#fff" stroke="#000" stroke-width="1"/><path d="M1650 1082 V1089" stroke="#0aa" stroke-width="1"/></svg><svg style="position:absolute;left:1672px;top:1074px" width="20" height="20" viewBox="1672 1074 20 20"><path d="M1674 1081 L1676.5 1084 L1681 1077" stroke="#f05020" stroke-width="2" fill="none"/><rect x="1681.5" y="1078.5" width="8" height="12" rx="1" fill="#c0c0c0" stroke="#333"/><rect x="1683" y="1080.5" width="5" height="1" fill="#666"/><rect x="1687" y="1079.5" width="2" height="1" fill="#e00"/><rect x="1683" y="1083" width="5" height="1" fill="#fff"/><rect x="1682" y="1089.5" width="8" height="1.5" fill="#000"/></svg><svg style="position:absolute;left:1706px;top:1068px" width="2" height="31" viewBox="1706 1068 2 31"><rect x="1706" y="1068" width="1.3" height="1.3" fill="#555"/><rect x="1706" y="1071" width="1.3" height="1.3" fill="#555"/><rect x="1706" y="1074" width="1.3" height="1.3" fill="#555"/><rect x="1706" y="1077" width="1.3" height="1.3" fill="#555"/><rect x="1706" y="1080" width="1.3" height="1.3" fill="#555"/><rect x="1706" y="1083" width="1.3" height="1.3" fill="#555"/><rect x="1706" y="1086" width="1.3" height="1.3" fill="#555"/><rect x="1706" y="1089" width="1.3" height="1.3" fill="#555"/><rect x="1706" y="1092" width="1.3" height="1.3" fill="#555"/><rect x="1706" y="1095" width="1.3" height="1.3" fill="#555"/><rect x="1706" y="1098" width="1.3" height="1.3" fill="#555"/></svg><svg style="position:absolute;left:1717px;top:1115px" width="12" height="9" viewBox="1717 1115 12 9"><path d="M1719.5 1117.5 L1723 1121 L1726.5 1117.5" stroke="#2a2d30" stroke-width="2" fill="none"/></svg><svg style="position:absolute;left:617px;top:1110px" width="20" height="20" viewBox="617 1110 20 20"><path d="M619 1113 L629 1112 L625.5 1119 Z" fill="#e00000" stroke="#000" stroke-width="0.7"/><path d="M624.5 1117 L625 1122" stroke="#000" stroke-width="1"/><path d="M634 1123 H630 V1120 L626.5 1123.5 L630 1127 V1124 H634 Z" fill="#000"/></svg><svg style="position:absolute;left:638px;top:1110px" width="20" height="20" viewBox="638 1110 20 20"><path d="M640 1113 L650 1112 L646.5 1119 Z" fill="#e00000" stroke="#000" stroke-width="0.7"/><path d="M645.5 1117 L646 1122" stroke="#000" stroke-width="1"/><path d="M649 1123 H652 V1120 L655.5 1123.5 L652 1127 V1124 H649 Z" fill="#000"/></svg><svg style="position:absolute;left:2418px;top:40px" width="31" height="31" viewBox="2418 40 31 31"><rect x="2418" y="40" width="31" height="31" fill="url(#chk2)"/><path d="M2418.5 71 V40.5 H2449" stroke="#b8b8b8" fill="none"/></svg><svg style="position:absolute;left:2426px;top:48px" width="18" height="18" viewBox="2426 48 18 18"><rect x="2428.5" y="50.5" width="12" height="11" fill="#fff" stroke="#111"/><rect x="2428" y="50" width="13" height="2" fill="#000080"/><rect x="2429" y="60" width="11" height="1" fill="#999"/><path d="M2432 54 L2439 60 M2434 53.5 L2440.5 59 M2432 56.5 L2437 60.5" stroke="#aaa" stroke-width="0.9"/></svg><svg style="position:absolute;left:2457px;top:46px" width="20" height="20" viewBox="2457 46 20 20"><rect x="2460" y="48" width="8" height="15" rx="1" fill="#2a2e33"/><rect x="2461.5" y="49.5" width="5" height="4" fill="#e0e0e0"/><rect x="2459" y="62" width="10" height="2" fill="#2a2e33"/><path d="M2468 53 Q2473 55 2473 60 Q2473 63 2471 62 Q2469 61 2469 57" stroke="#2a2e33" stroke-width="1.2" fill="none"/></svg><svg style="position:absolute;left:2488px;top:46px" width="20" height="20" viewBox="2488 46 20 20"><path d="M2490 58 L2498 49 L2506 54 L2498 63 Z" fill="#c8d8c8" stroke="#7878d8" stroke-width="0.8"/><path d="M2490 56 L2498 48 L2506 52 L2498 61 Z" fill="url(#bookg)" stroke="#6a6ad0" stroke-width="0.8"/><defs><linearGradient id="bookg" x1="0" y1="0" x2="1" y2="1"><stop offset="0" stop-color="#b0b0f8"/><stop offset="1" stop-color="#5a5ad8"/></linearGradient></defs></svg><svg style="position:absolute;left:2522px;top:41px" width="2" height="31" viewBox="2522 41 2 31"><rect x="2522" y="41" width="1.3" height="1.3" fill="#555"/><rect x="2522" y="44" width="1.3" height="1.3" fill="#555"/><rect x="2522" y="47" width="1.3" height="1.3" fill="#555"/><rect x="2522" y="50" width="1.3" height="1.3" fill="#555"/><rect x="2522" y="53" width="1.3" height="1.3" fill="#555"/><rect x="2522" y="56" width="1.3" height="1.3" fill="#555"/><rect x="2522" y="59" width="1.3" height="1.3" fill="#555"/><rect x="2522" y="62" width="1.3" height="1.3" fill="#555"/><rect x="2522" y="65" width="1.3" height="1.3" fill="#555"/><rect x="2522" y="68" width="1.3" height="1.3" fill="#555"/><rect x="2522" y="71" width="1.3" height="1.3" fill="#555"/></svg><svg style="position:absolute;left:1934px;top:82px" width="18" height="16" viewBox="1934 82 18 16"><rect x="1936.5" y="84.5" width="12" height="11" fill="#fff" stroke="#111"/><rect x="1936" y="84" width="13" height="2" fill="#000080"/><rect x="1937" y="94" width="11" height="1" fill="#999"/><path d="M1940 88 L1947 94 M1942 87.5 L1948.5 93 M1940 90.5 L1945 94.5" stroke="#aaa" stroke-width="0.9"/></svg><svg style="position:absolute;left:1954px;top:81px" width="20" height="18" viewBox="1954 81 20 18"><path d="M1956.5 95.5 V85 Q1956.5 83.5 1958 83.5 H1961 L1963 85 H1969.5 V95.5 Z" fill="#f0f060" stroke="#888" stroke-width="1"/><rect x="1957" y="94.5" width="14" height="2" fill="#000"/><rect x="1970" y="86" width="1.5" height="10" fill="#000"/></svg><svg style="position:absolute;left:1980px;top:82px" width="20" height="18" viewBox="1980 82 20 18"><rect x="1982.5" y="88.5" width="11" height="9" fill="#fff" stroke="#777"/><path d="M1984 92.5 H1985 M1986.5 92.5 H1992 M1984 95 H1985 M1986.5 95 H1992" stroke="#666"/><path d="M1985 88 L1989 84 H1996 V88 H1990" fill="#ddd" stroke="#888" stroke-width="0.8"/><rect x="1996" y="84" width="1.5" height="6" fill="#7070c8"/></svg><svg style="position:absolute;left:2011px;top:77px" width="2" height="27" viewBox="2011 77 2 27"><rect x="2011" y="77" width="1.3" height="1.3" fill="#555"/><rect x="2011" y="80" width="1.3" height="1.3" fill="#555"/><rect x="2011" y="83" width="1.3" height="1.3" fill="#555"/><rect x="2011" y="86" width="1.3" height="1.3" fill="#555"/><rect x="2011" y="89" width="1.3" height="1.3" fill="#555"/><rect x="2011" y="92" width="1.3" height="1.3" fill="#555"/><rect x="2011" y="95" width="1.3" height="1.3" fill="#555"/><rect x="2011" y="98" width="1.3" height="1.3" fill="#555"/><rect x="2011" y="101" width="1.3" height="1.3" fill="#555"/></svg><svg style="position:absolute;left:2018px;top:82px" width="20" height="16" viewBox="2018 82 20 16"><path d="M2022 90 A5.5 5.5 0 0 1 2033 88" stroke="#2a2e33" stroke-width="2" fill="none"/><path d="M2034 90 A5.5 5.5 0 0 1 2023 92" stroke="#2a2e33" stroke-width="2" fill="none"/><path d="M2020 88 L2024 92 L2026 87 Z M2036 92 L2032 88 L2030 93 Z" fill="#2a2e33"/></svg><svg style="position:absolute;left:2040px;top:83px" width="18" height="15" viewBox="2040 83 18 15"><path d="M2046 86 L2042 90.5 L2046 95 M2052 86 L2056 90.5 L2052 95 M2050.5 85 L2047.5 96" stroke="#2a2e33" stroke-width="1.3" fill="none"/></svg><svg style="position:absolute;left:2475px;top:80px" width="20" height="20" viewBox="2475 80 20 20"><path d="M2478 87 Q2481 83 2485 84" stroke="#800080" stroke-width="1.6" fill="none"/><path d="M2477 87 L2481 84 L2480 90 Z" fill="#800080"/><rect x="2484.5" y="86.5" width="8" height="12" rx="1" fill="#c0c0c0" stroke="#444"/><rect x="2486" y="89" width="4" height="1" fill="#666"/><rect x="2490" y="88" width="2" height="1" fill="#e00"/><rect x="2485" y="97.5" width="8" height="1.5" fill="#000"/></svg><svg style="position:absolute;left:2504px;top:83px" width="14" height="15" viewBox="2504 83 14 15"><path d="M2505.5 84.5 H2515.5 L2511.5 89.5 V95 L2509.5 93.5 V89.5 Z" fill="none" stroke="#555" stroke-width="1.1"/></svg><svg style="position:absolute;left:2527px;top:77px" width="2" height="27" viewBox="2527 77 2 27"><rect x="2527" y="77" width="1.3" height="1.3" fill="#555"/><rect x="2527" y="80" width="1.3" height="1.3" fill="#555"/><rect x="2527" y="83" width="1.3" height="1.3" fill="#555"/><rect x="2527" y="86" width="1.3" height="1.3" fill="#555"/><rect x="2527" y="89" width="1.3" height="1.3" fill="#555"/><rect x="2527" y="92" width="1.3" height="1.3" fill="#555"/><rect x="2527" y="95" width="1.3" height="1.3" fill="#555"/><rect x="2527" y="98" width="1.3" height="1.3" fill="#555"/><rect x="2527" y="101" width="1.3" height="1.3" fill="#555"/></svg><svg style="position:absolute;left:2537px;top:85px" width="13" height="10" viewBox="2537 85 13 10"><path d="M2540 87.5 L2543.5 91 L2547 87.5" stroke="#2a2d30" stroke-width="2" fill="none"/></svg><svg style="position:absolute;left:2360px;top:586px" width="20" height="20" viewBox="2360 586 20 20"><rect x="2362.5" y="588.5" width="9" height="6" fill="#fff" stroke="#000080" stroke-width="1.3"/><rect x="2364.5" y="592.5" width="9" height="6" fill="#fff" stroke="#1818f0" stroke-width="1.3"/><rect x="2366.5" y="596.5" width="9" height="6" fill="#ddd" stroke="#000080" stroke-width="1.3"/><path d="M2378 589 L2375 592 M2375 590 V592.5 H2377.5" stroke="#000080" stroke-width="1.2" fill="none"/></svg><svg style="position:absolute;left:2392px;top:586px" width="20" height="20" viewBox="2392 586 20 20"><rect x="2395" y="589" width="5" height="5" fill="#10c010" stroke="#000" stroke-width="0.8"/><path d="M2404 589 L2409 588 L2408 593 L2403 594 Z" fill="#ff0" stroke="#000" stroke-width="0.7"/><path d="M2396 597 L2398 595 L2400 597 L2398 600 Z" fill="#e020e0" stroke="#000" stroke-width="0.7"/><circle cx="2402.5" cy="597" r="3.4" fill="#2ef0f0" stroke="#000" stroke-width="1"/><path d="M2405 599.5 L2409 603" stroke="#0000c0" stroke-width="1.8"/></svg><svg style="position:absolute;left:2425px;top:587px" width="20" height="19" viewBox="2425 587 20 19"><rect x="2427.5" y="589.5" width="14" height="11" fill="#fff" stroke="#111"/><rect x="2427" y="589" width="15" height="2" fill="#000080"/><rect x="2428" y="599" width="13" height="1" fill="#999"/><path d="M2431 599 L2433 598 V593 Q2434 592 2435 593 V592 Q2436 591 2437 592 V593 Q2438 592 2439 593 V600 Q2439 603 2436 603.5 H2434 Q2432 603 2431 600 Z" fill="#fff" stroke="#000" stroke-width="0.9"/><rect x="2433" y="603" width="5" height="1.2" fill="#000080"/></svg><svg style="position:absolute;left:2456px;top:587px" width="20" height="19" viewBox="2456 587 20 19"><path d="M2458 596 H2474 M2466 589 V604" stroke="#000" stroke-width="1.3"/><path d="M2462 594 L2465 592 L2463 597 Z M2470 598 L2467 600 L2469 595 Z" fill="#000080"/></svg><svg style="position:absolute;left:2482px;top:580px" width="31" height="31" viewBox="2482 580 31 31"><rect x="2482" y="580" width="31" height="31" fill="url(#chk2)"/><path d="M2482.5 611 V580.5 H2513" stroke="#b8b8b8" fill="none"/></svg><svg style="position:absolute;left:2488px;top:586px" width="20" height="20" viewBox="2488 586 20 20"><path d="M2490 588 L2493 591 L2490 594 Z" fill="#000080"/><path d="M2492 598 L2498 593 L2504 598.5 L2498 603.5 Z" fill="#000"/><path d="M2492 597 L2498 592 L2504 597.5 L2498 602.5 Z" fill="#5f9e9e"/><path d="M2499 603 l1 2 M2501 601.5 l1 2 M2503 600 l1 2" stroke="#e8e000" stroke-width="1"/><rect x="2497" y="596" width="1" height="1" fill="#ddd"/><rect x="2499" y="597" width="1" height="1" fill="#ddd"/></svg><svg style="position:absolute;left:2522px;top:581px" width="2" height="31" viewBox="2522 581 2 31"><rect x="2522" y="581" width="1.3" height="1.3" fill="#555"/><rect x="2522" y="584" width="1.3" height="1.3" fill="#555"/><rect x="2522" y="587" width="1.3" height="1.3" fill="#555"/><rect x="2522" y="590" width="1.3" height="1.3" fill="#555"/><rect x="2522" y="593" width="1.3" height="1.3" fill="#555"/><rect x="2522" y="596" width="1.3" height="1.3" fill="#555"/><rect x="2522" y="599" width="1.3" height="1.3" fill="#555"/><rect x="2522" y="602" width="1.3" height="1.3" fill="#555"/><rect x="2522" y="605" width="1.3" height="1.3" fill="#555"/><rect x="2522" y="608" width="1.3" height="1.3" fill="#555"/><rect x="2522" y="611" width="1.3" height="1.3" fill="#555"/></svg><svg style="position:absolute;left:1758px;top:622px" width="20" height="19" viewBox="1758 622 20 19"><path d="M1763 632 L1769 627 L1775 632.5 L1769 637.5 Z" fill="#000"/><path d="M1763 631 L1769 626 L1775 631.5 L1769 636.5 Z" fill="#5f9e9e"/><path d="M1770 637 l1 2 M1772 635.5 l1 2 M1774 634 l1 2" stroke="#e8e000" stroke-width="1"/><rect x="1768" y="630" width="1" height="1" fill="#ddd"/><rect x="1770" y="631" width="1" height="1" fill="#ddd"/><path d="M1760 630 L1763 627 M1762 628 Q1764 624 1767 626" stroke="#000" stroke-width="1.4" fill="none"/></svg><svg style="position:absolute;left:1790px;top:621px" width="20" height="20" viewBox="1790 621 20 20"><path d="M1795 632 L1801 627 L1807 632.5 L1801 637.5 Z" fill="#8a8a8a"/><path d="M1795 631 L1801 626 L1807 631.5 L1801 636.5 Z" fill="#a8cccc"/><path d="M1802 637 l1 2 M1804 635.5 l1 2 M1806 634 l1 2" stroke="#e8e000" stroke-width="1"/><rect x="1800" y="630" width="1" height="1" fill="#ddd"/><rect x="1802" y="631" width="1" height="1" fill="#ddd"/><path d="M1792 623 L1799 629 M1799 622 L1793 629" stroke="#c07070" stroke-width="1.6"/></svg><svg style="position:absolute;left:1822px;top:621px" width="20" height="20" viewBox="1822 621 20 20"><path d="M1827 632 L1833 627 L1839 632.5 L1833 637.5 Z" fill="#8a8a8a"/><path d="M1827 631 L1833 626 L1839 631.5 L1833 636.5 Z" fill="#a8cccc"/><path d="M1834 637 l1 2 M1836 635.5 l1 2 M1838 634 l1 2" stroke="#e8e000" stroke-width="1"/><rect x="1832" y="630" width="1" height="1" fill="#ddd"/><rect x="1834" y="631" width="1" height="1" fill="#ddd"/><path d="M1825 626 Q1828 621 1832 624 M1825 628 Q1829 631 1832 626" stroke="#50b050" stroke-width="1.4" fill="none"/></svg><svg style="position:absolute;left:1866px;top:621px" width="20" height="20" viewBox="1866 621 20 20"><path d="M1872 632 L1878 627 L1884 632.5 L1878 637.5 Z" fill="#8a8a8a"/><path d="M1872 631 L1878 626 L1884 631.5 L1878 636.5 Z" fill="#a8cccc"/><path d="M1879 637 l1 2 M1881 635.5 l1 2 M1883 634 l1 2" stroke="#e8e000" stroke-width="1"/><rect x="1877" y="630" width="1" height="1" fill="#ddd"/><rect x="1879" y="631" width="1" height="1" fill="#ddd"/><rect x="1869" y="624" width="6.5" height="6.5" fill="#f07070"/></svg><svg style="position:absolute;left:1910px;top:622px" width="20" height="20" viewBox="1910 622 20 20"><rect x="1912.5" y="628.5" width="11" height="9" fill="#fff" stroke="#000" stroke-width="1.3"/><path d="M1914 633 H1915 M1916.5 633 H1922 M1914 635.5 H1915 M1916.5 635.5 H1922" stroke="#000" stroke-width="1"/><path d="M1914.5 629 L1918 625 H1925 V628 H1920 L1918 630" fill="#ddd" stroke="#666" stroke-width="0.8"/><rect x="1925" y="624" width="1.6" height="7" fill="#000080"/></svg><svg style="position:absolute;left:2533px;top:626px" width="14" height="10" viewBox="2533 626 14 10"><path d="M2535.5 628.5 L2539 632 L2542.5 628.5" stroke="#2a2d30" stroke-width="2" fill="none"/></svg><svg style="position:absolute;left:2482px;top:941px" width="31" height="31" viewBox="2482 941 31 31"><rect x="2482" y="941" width="31" height="31" fill="url(#chk2)"/><path d="M2482.5 972 V941.5 H2513" stroke="#b8b8b8" fill="none"/></svg><svg style="position:absolute;left:2488px;top:947px" width="20" height="20" viewBox="2488 947 20 20"><rect x="2492.5" y="950.5" width="12" height="10" fill="#fff" stroke="#111"/><rect x="2492" y="950" width="13" height="2" fill="#000080"/><rect x="2493" y="959" width="11" height="1" fill="#999"/><path d="M2496 954 L2503 960 M2498 953.5 L2504.5 959 M2496 956.5 L2501 960.5" stroke="#aaa" stroke-width="0.9"/><rect x="2489.5" y="957.5" width="8.5" height="6" rx="1" fill="#fff" stroke="#000" stroke-width="1.1"/><path d="M2491 960 H2492 M2493 960 H2496.5 M2491 962 H2492 M2493 962 H2496.5" stroke="#000" stroke-width="0.8"/></svg><svg style="position:absolute;left:2522px;top:942px" width="2" height="31" viewBox="2522 942 2 31"><rect x="2522" y="942" width="1.3" height="1.3" fill="#555"/><rect x="2522" y="945" width="1.3" height="1.3" fill="#555"/><rect x="2522" y="948" width="1.3" height="1.3" fill="#555"/><rect x="2522" y="951" width="1.3" height="1.3" fill="#555"/><rect x="2522" y="954" width="1.3" height="1.3" fill="#555"/><rect x="2522" y="957" width="1.3" height="1.3" fill="#555"/><rect x="2522" y="960" width="1.3" height="1.3" fill="#555"/><rect x="2522" y="963" width="1.3" height="1.3" fill="#555"/><rect x="2522" y="966" width="1.3" height="1.3" fill="#555"/><rect x="2522" y="969" width="1.3" height="1.3" fill="#555"/><rect x="2522" y="972" width="1.3" height="1.3" fill="#555"/></svg><svg style="position:absolute;left:1755px;top:977px" width="20" height="20" viewBox="1755 977 20 20"><rect x="1755" y="977" width="20" height="20" fill="url(#chk2)"/><path d="M1755.5 997 V977.5 H1775" stroke="#b8b8b8" fill="none"/></svg><svg style="position:absolute;left:1756px;top:978px" width="18" height="18" viewBox="1756 978 18 18"><rect x="1757.5" y="979.5" width="6" height="6" fill="#ccc" stroke="#777"/><rect x="1757.5" y="988.5" width="6" height="6" fill="#fff" stroke="#777"/><path d="M1759 982.5 H1762 M1760.5 981 V984 M1759 991.5 H1762 M1760.5 990 V993" stroke="#000" stroke-width="1"/><path d="M1765 980.5 H1769 M1765 983 H1766 M1767 983 H1772 M1765 985 H1766 M1767 985 H1772 M1765 987 H1766 M1767 987 H1772 M1765 989 H1769 M1767 992 H1772 M1767 994 H1772" stroke="#444" stroke-width="0.9"/></svg><svg style="position:absolute;left:1778px;top:978px" width="16" height="18" viewBox="1778 978 16 18"><text x="1779" y="986" font-family="Liberation Serif" font-weight="bold" font-size="9" fill="#000">A</text><text x="1779.5" y="994" font-family="Liberation Serif" font-weight="bold" font-size="9" fill="#000">Z</text><path d="M1789.5 979 V992" stroke="#000080" stroke-width="1.2" stroke-dasharray="1 1"/><path d="M1787 989 L1789.5 994 L1792 989 Z" fill="#000080"/></svg><svg style="position:absolute;left:1802px;top:977px" width="2" height="20" viewBox="1802 977 2 20"><rect x="1802" y="977" width="1.3" height="1.3" fill="#555"/><rect x="1802" y="980" width="1.3" height="1.3" fill="#555"/><rect x="1802" y="983" width="1.3" height="1.3" fill="#555"/><rect x="1802" y="986" width="1.3" height="1.3" fill="#555"/><rect x="1802" y="989" width="1.3" height="1.3" fill="#555"/><rect x="1802" y="992" width="1.3" height="1.3" fill="#555"/><rect x="1802" y="995" width="1.3" height="1.3" fill="#555"/></svg><svg style="position:absolute;left:1835px;top:977px" width="2" height="20" viewBox="1835 977 2 20"><rect x="1835" y="977" width="1.3" height="1.3" fill="#555"/><rect x="1835" y="980" width="1.3" height="1.3" fill="#555"/><rect x="1835" y="983" width="1.3" height="1.3" fill="#555"/><rect x="1835" y="986" width="1.3" height="1.3" fill="#555"/><rect x="1835" y="989" width="1.3" height="1.3" fill="#555"/><rect x="1835" y="992" width="1.3" height="1.3" fill="#555"/><rect x="1835" y="995" width="1.3" height="1.3" fill="#555"/></svg><svg style="position:absolute;left:1842px;top:977px" width="20" height="20" viewBox="1842 977 20 20"><rect x="1842" y="977" width="20" height="20" fill="url(#chk2)"/><path d="M1842.5 997 V977.5 H1862" stroke="#b8b8b8" fill="none"/></svg><svg style="position:absolute;left:1844px;top:980px" width="16" height="16" viewBox="1844 980 16 16"><rect x="1846.5" y="982.5" width="11" height="10" fill="#fff" stroke="#000" stroke-width="1.3"/><path d="M1848 988.5 H1849 M1850 988.5 H1856 M1848 990.5 H1849 M1850 990.5 H1856" stroke="#000" stroke-width="0.9"/></svg><svg style="position:absolute;left:1034px;top:263px" width="28" height="28" viewBox="1034 263 28 28"><defs><radialGradient id="bstar" cx="0.35" cy="0.4" r="0.75"><stop offset="0" stop-color="#fff27a"/><stop offset="0.5" stop-color="#ffc21a"/><stop offset="1" stop-color="#ff7a00"/></radialGradient></defs><path d="M1047.50 266.00 L1050.60 273.20 L1058.00 273.40 L1052.20 278.60 L1054.30 286.80 L1047.50 282.40 L1040.70 286.80 L1042.80 278.60 L1037.00 273.40 L1044.40 273.20 Z" fill="url(#bstar)" stroke="#ff9a10" stroke-width="0.5" stroke-linejoin="round"/></svg><svg style="position:absolute;left:1034px;top:99px" width="28" height="28" viewBox="1034 99 28 28"><path d="M1040 112 V119.5 L1047.5 123 L1055 119.5 V112 L1047.5 115 Z" fill="#f2c21a" stroke="#e59a10" stroke-width="0.8"/><path d="M1047.5 115 V123" stroke="#ffe98a" stroke-width="0.6"/><path d="M1040 112 L1047.5 108.5 L1055 112 L1047.5 115 Z" fill="#f0a818" stroke="#e08a10" stroke-width="0.6"/><path d="M1038.5 108.5 L1045 102.5 L1048 107 L1041.5 112.5 Z" fill="#f5e450" stroke="#e8a010" stroke-width="0.8"/><path d="M1049 107.5 L1050.5 102.5 L1057 107.5 L1054.5 111.5 Z" fill="#f0d840" stroke="#e8a010" stroke-width="0.8"/><path d="M1037.5 110 L1041 113 M1054 111 L1057.5 110" stroke="#f0a020" stroke-width="1.2"/></svg><svg style="position:absolute;left:468px;top:143px" width="20" height="20" viewBox="468 143 20 20"><path d="M478 145 L486 149.5 V157 L478 161 L470 157 V149.5 Z" fill="#fde9a8" stroke="#d9a030" stroke-width="1.1"/><path d="M478 152.5 L486 149.5 V157 L478 161 Z" fill="#f2b428"/><path d="M470.5 149.5 L478 152.5 L485.5 149.5 L478 145.5 Z" fill="#fdf0c8" stroke="#e0a840" stroke-width="0.5"/><path d="M478 152.5 V161" stroke="#e09a20" stroke-width="0.6"/></svg><svg style="position:absolute;left:1029px;top:392px" width="28" height="28" viewBox="1029 392 28 28"><path d="M1033 396.5 L1045.5 393.5 L1052 402 L1050 415.5 L1031 411 Z" fill="#e9b44c"/><path d="M1035.5 398.5 L1046 397 L1050 403 L1043 406 Z" fill="#f2f2f2" stroke="#d0a040" stroke-width="0.6"/><path d="M1033 398 L1043.5 406 L1052 403 L1050 415.5 L1031 411 Z" fill="#e6c260" stroke="#cfa040" stroke-width="0.6"/><path d="M1031.5 410.5 L1042.5 405.5 L1049.5 415" stroke="#c89a38" stroke-width="0.8" fill="none"/></svg><svg style="position:absolute;left:1686px;top:101px" width="26" height="26" viewBox="1686 101 26 26"><defs><linearGradient id="clkb" x1="0" y1="0" x2="1" y2="1"><stop offset="0" stop-color="#18a0e8"/><stop offset="1" stop-color="#1838b8"/></linearGradient></defs><circle cx="1699" cy="114" r="10.3" fill="#f4f4f6" stroke="#a8a8ae" stroke-width="1.8"/><path d="M1699.5 107 V115" stroke="#555" stroke-width="1"/><path d="M1692.5 114.5 H1697.5" stroke="#f08860" stroke-width="1.1"/><path d="M1694 118.5 L1699 113 V116.5 Q1704 116 1707.5 111 Q1707 119 1699.5 121 V123.5 Z" fill="url(#clkb)"/></svg><svg style="position:absolute;left:1686px;top:511px" width="26" height="26" viewBox="1686 511 26 26"><defs><linearGradient id="lnkb" x1="0" y1="0" x2="0" y2="1"><stop offset="0" stop-color="#a0a8f0"/><stop offset="0.42" stop-color="#5a70d8"/><stop offset="0.45" stop-color="#1c3ac8"/><stop offset="1" stop-color="#00d0ff"/></linearGradient></defs><circle cx="1699" cy="524" r="10.6" fill="url(#lnkb)" stroke="#1a5a9a" stroke-width="0.8"/><path d="M1693.5 524 H1703.5 M1699.5 519.5 L1704 524 L1699.5 528.5" stroke="#eee" stroke-width="2.2" fill="none" stroke-linecap="round" stroke-linejoin="round"/></svg><svg style="position:absolute;left:1809px;top:977px" width="20" height="20" viewBox="1809 977 20 20"><defs><radialGradient id="pstar" cx="0.4" cy="0.4" r="0.7"><stop offset="0" stop-color="#fff07a"/><stop offset="0.5" stop-color="#ffc020"/><stop offset="1" stop-color="#ff8000"/></radialGradient></defs><path d="M1819.00 979.00 L1821.36 984.49 L1827.00 984.64 L1822.58 988.60 L1824.18 994.85 L1819.00 991.50 L1813.82 994.85 L1815.42 988.60 L1811.00 984.64 L1816.64 984.49 Z" fill="url(#pstar)"/></svg><div style="position:absolute;left:406px;top:1058px;width:1336px;height:7px;background:#fcfcfc"></div><div style="position:absolute;left:1749px;top:571px;width:802px;height:7px;background:#fcfcfc"></div><div style="position:absolute;left:1749px;top:932px;width:802px;height:7px;background:#fcfcfc"></div><div style="position:absolute;left:399px;top:723px;width:7px;height:10px;background:#fcfcfc;border-top:1px solid #e0e0e0;border-bottom:1px solid #e0e0e0;box-sizing:border-box"></div><div style="position:absolute;left:399px;top:725px;width:6px;height:6px;border-radius:3px;background:#d4d4d4;box-shadow:0 0 0 0.5px #bdbdbd"></div><div style="position:absolute;left:1742px;top:723px;width:7px;height:10px;background:#fcfcfc;border-top:1px solid #e0e0e0;border-bottom:1px solid #e0e0e0;box-sizing:border-box"></div><div style="position:absolute;left:1742px;top:725px;width:6px;height:6px;border-radius:3px;background:#d4d4d4;box-shadow:0 0 0 0.5px #bdbdbd"></div><div style="position:absolute;left:1071px;top:1059px;width:6px;height:6px;border-radius:3px;background:#d4d4d4;box-shadow:0 0 0 0.5px #bdbdbd"></div><div style="position:absolute;left:2149px;top:571px;width:6px;height:6px;border-radius:3px;background:#d4d4d4;box-shadow:0 0 0 0.5px #bdbdbd"></div><div style="position:absolute;left:2149px;top:932px;width:6px;height:6px;border-radius:3px;background:#d4d4d4;box-shadow:0 0 0 0.5px #bdbdbd"></div><div style="position:absolute;left:2149px;top:1364px;width:6px;height:6px;border-radius:3px;background:#d4d4d4;box-shadow:0 0 0 0.5px #bdbdbd"></div>
</body></html>
